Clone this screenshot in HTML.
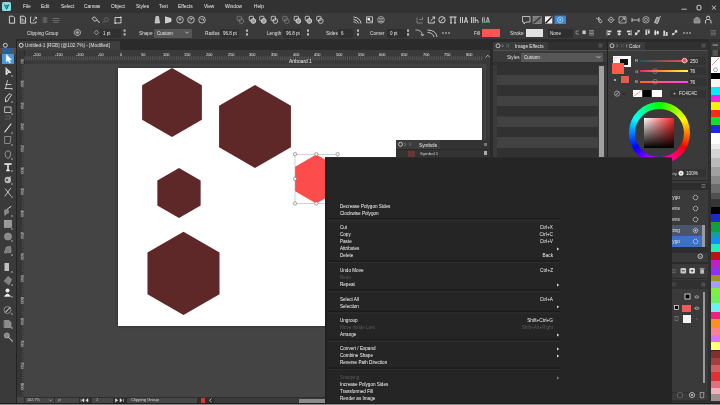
<!DOCTYPE html>
<html><head><meta charset="utf-8">
<style>
*{margin:0;padding:0;box-sizing:border-box}
html,body{width:720px;height:405px;overflow:hidden;background:#474747;font-family:"Liberation Sans",sans-serif;color:#ddd}
.a{position:absolute}
.t{position:absolute;line-height:6px;height:6px;white-space:nowrap;color:#e6e6e6;will-change:transform}
svg{position:absolute;left:0;top:0}
</style></head><body>
<div class="a" style="left:0px;top:0px;width:720px;height:12.5px;background:#323232;"></div>
<div class="a" style="left:0px;top:12.5px;width:720px;height:0.8px;background:#1c1c1c;"></div>
<div class="a" style="left:2.2px;top:2px;width:9px;height:9px;background:#86dde2;border-radius:1.5px"></div>
<svg width="720" height="405"><path d="M4.3 4.3 L6.6 9.2 L9 4.3 M5.6 5.6 L8.4 5.6 M6.1 7 L8 7" stroke="#1a6a70" stroke-width="1" fill="none"/></svg>
<div class="t" style="left:22.8px;top:4.4px;font-size:4.8px;color:#ececec;">File</div>
<div class="t" style="left:41.3px;top:4.4px;font-size:4.8px;color:#ececec;">Edit</div>
<div class="t" style="left:60.8px;top:4.4px;font-size:4.8px;color:#ececec;">Select</div>
<div class="t" style="left:83.8px;top:4.4px;font-size:4.8px;color:#ececec;">Canvas</div>
<div class="t" style="left:110.8px;top:4.4px;font-size:4.8px;color:#ececec;">Object</div>
<div class="t" style="left:135.8px;top:4.4px;font-size:4.8px;color:#ececec;">Styles</div>
<div class="t" style="left:158.8px;top:4.4px;font-size:4.8px;color:#ececec;">Text</div>
<div class="t" style="left:178.3px;top:4.4px;font-size:4.8px;color:#ececec;">Effects</div>
<div class="t" style="left:203.8px;top:4.4px;font-size:4.8px;color:#ececec;">View</div>
<div class="t" style="left:224.8px;top:4.4px;font-size:4.8px;color:#ececec;">Window</div>
<div class="t" style="left:253.8px;top:4.4px;font-size:4.8px;color:#ececec;">Help</div>
<svg width="720" height="405"><path d="M681.5 9.2 H686.7" stroke="#e0e0e0" stroke-width="0.8"/><rect x="697" y="5.4" width="3.9" height="4.5" rx="1.2" fill="none" stroke="#e0e0e0" stroke-width="1"/><path d="M711.9 5.6 L716 9.7 M716 5.6 L711.9 9.7" stroke="#e8e8e8" stroke-width="0.8"/></svg>
<div class="a" style="left:0px;top:13.3px;width:720px;height:12.7px;background:#3b3b3b;"></div>
<div class="a" style="left:0px;top:26px;width:720px;height:13px;background:#3a3a3a;"></div>
<div class="a" style="left:0px;top:39px;width:720px;height:3px;background:#2b2b2b;"></div>
<div class="a" style="left:16px;top:39px;width:477px;height:11px;background:#2b2b2b;"></div>
<div class="a" style="left:17px;top:41px;width:103px;height:9px;background:#3f3f3f;"></div>
<svg width="720" height="405"><circle cx="21.2" cy="45.3" r="2" fill="none" stroke="#d8d8d8" stroke-width="1"/></svg>
<div class="t" style="left:25px;top:42.6px;font-size:4.75px;color:#e0e0e0;">Untitled-1 [RGB] (@102.7%) - [Modified]</div>
<div class="a" style="left:0px;top:39px;width:16px;height:366px;background:#3a3a3a;"></div>
<div class="a" style="left:16px;top:39px;width:1px;height:366px;background:#232323;"></div>
<svg width="720" height="405"><circle cx="5.3" cy="45.3" r="2" fill="none" stroke="#d0d0d0" stroke-width="1"/></svg>
<div class="a" style="left:0px;top:48px;width:2.2px;height:5.5px;background:#6b4525;"></div>
<div class="a" style="left:13.7px;top:48px;width:2.3px;height:5.5px;background:#6b4525;"></div>
<div class="a" style="left:2.2px;top:48px;width:11.5px;height:5.5px;background:#2f5f90;"></div>
<div class="a" style="left:2.2px;top:53.5px;width:11.5px;height:10.5px;background:#4896dc;"></div>
<div class="a" style="left:17px;top:50px;width:476px;height:14px;background:#3a3a3a;"></div>
<div class="a" style="left:17px;top:50px;width:7px;height:347px;background:#363636;"></div>
<div class="a" style="left:24px;top:63.5px;width:466px;height:0.8px;background:#2a2a2a;"></div>
<div class="a" style="left:23.5px;top:50px;width:0.8px;height:347px;background:#2a2a2a;"></div>
<div class="a" style="left:24.3px;top:64.3px;width:466px;height:333px;background:#444444;"></div>
<div class="a" style="left:118px;top:68px;width:364px;height:258px;background:#ffffff;box-shadow:0 0 3px rgba(0,0,0,0.45)"></div>
<svg width="720" height="405"><path d="M24.90 56.3 V60.3" stroke="#747474" stroke-width="0.5"/><path d="M27.07 56.3 V60.3" stroke="#747474" stroke-width="0.5"/><path d="M29.23 56.3 V60.3" stroke="#747474" stroke-width="0.5"/><path d="M31.40 56.3 V60.3" stroke="#747474" stroke-width="0.5"/><path d="M33.57 56.3 V60.3" stroke="#747474" stroke-width="0.5"/><path d="M35.73 56.3 V60.3" stroke="#747474" stroke-width="0.5"/><path d="M37.90 56.3 V60.3" stroke="#747474" stroke-width="0.5"/><path d="M40.06 56.3 V60.3" stroke="#747474" stroke-width="0.5"/><path d="M42.23 56.3 V60.3" stroke="#747474" stroke-width="0.5"/><path d="M44.39 56.3 V60.3" stroke="#747474" stroke-width="0.5"/><path d="M46.56 56.3 V60.3" stroke="#747474" stroke-width="0.5"/><path d="M48.72 56.3 V60.3" stroke="#747474" stroke-width="0.5"/><path d="M50.89 56.3 V60.3" stroke="#747474" stroke-width="0.5"/><path d="M53.05 56.3 V60.3" stroke="#747474" stroke-width="0.5"/><path d="M55.22 56.3 V60.3" stroke="#747474" stroke-width="0.5"/><path d="M57.38 56.3 V60.3" stroke="#747474" stroke-width="0.5"/><path d="M59.55 56.3 V60.3" stroke="#747474" stroke-width="0.5"/><path d="M61.71 56.3 V60.3" stroke="#747474" stroke-width="0.5"/><path d="M63.88 56.3 V60.3" stroke="#747474" stroke-width="0.5"/><path d="M66.04 56.3 V60.3" stroke="#747474" stroke-width="0.5"/><path d="M68.21 56.3 V60.3" stroke="#747474" stroke-width="0.5"/><path d="M70.37 56.3 V60.3" stroke="#747474" stroke-width="0.5"/><path d="M72.54 56.3 V60.3" stroke="#747474" stroke-width="0.5"/><path d="M74.70 56.3 V60.3" stroke="#747474" stroke-width="0.5"/><path d="M76.87 56.3 V60.3" stroke="#747474" stroke-width="0.5"/><path d="M79.03 56.3 V60.3" stroke="#747474" stroke-width="0.5"/><path d="M81.20 56.3 V60.3" stroke="#747474" stroke-width="0.5"/><path d="M83.36 56.3 V60.3" stroke="#747474" stroke-width="0.5"/><path d="M85.53 56.3 V60.3" stroke="#747474" stroke-width="0.5"/><path d="M87.69 56.3 V60.3" stroke="#747474" stroke-width="0.5"/><path d="M89.86 56.3 V60.3" stroke="#747474" stroke-width="0.5"/><path d="M92.02 56.3 V60.3" stroke="#747474" stroke-width="0.5"/><path d="M94.19 56.3 V60.3" stroke="#747474" stroke-width="0.5"/><path d="M96.35 56.3 V60.3" stroke="#747474" stroke-width="0.5"/><path d="M98.52 56.3 V60.3" stroke="#747474" stroke-width="0.5"/><path d="M100.68 56.3 V60.3" stroke="#747474" stroke-width="0.5"/><path d="M102.84 56.3 V60.3" stroke="#747474" stroke-width="0.5"/><path d="M105.01 56.3 V60.3" stroke="#747474" stroke-width="0.5"/><path d="M107.17 56.3 V60.3" stroke="#747474" stroke-width="0.5"/><path d="M109.34 56.3 V60.3" stroke="#747474" stroke-width="0.5"/><path d="M111.50 56.3 V60.3" stroke="#747474" stroke-width="0.5"/><path d="M113.67 56.3 V60.3" stroke="#747474" stroke-width="0.5"/><path d="M115.83 56.3 V60.3" stroke="#747474" stroke-width="0.5"/><path d="M118.00 56.3 V60.3" stroke="#747474" stroke-width="0.5"/><path d="M120.17 56.3 V60.3" stroke="#747474" stroke-width="0.5"/><path d="M122.33 56.3 V60.3" stroke="#747474" stroke-width="0.5"/><path d="M124.50 56.3 V60.3" stroke="#747474" stroke-width="0.5"/><path d="M126.66 56.3 V60.3" stroke="#747474" stroke-width="0.5"/><path d="M128.82 56.3 V60.3" stroke="#747474" stroke-width="0.5"/><path d="M130.99 56.3 V60.3" stroke="#747474" stroke-width="0.5"/><path d="M133.16 56.3 V60.3" stroke="#747474" stroke-width="0.5"/><path d="M135.32 56.3 V60.3" stroke="#747474" stroke-width="0.5"/><path d="M137.49 56.3 V60.3" stroke="#747474" stroke-width="0.5"/><path d="M139.65 56.3 V60.3" stroke="#747474" stroke-width="0.5"/><path d="M141.81 56.3 V60.3" stroke="#747474" stroke-width="0.5"/><path d="M143.98 56.3 V60.3" stroke="#747474" stroke-width="0.5"/><path d="M146.15 56.3 V60.3" stroke="#747474" stroke-width="0.5"/><path d="M148.31 56.3 V60.3" stroke="#747474" stroke-width="0.5"/><path d="M150.47 56.3 V60.3" stroke="#747474" stroke-width="0.5"/><path d="M152.64 56.3 V60.3" stroke="#747474" stroke-width="0.5"/><path d="M154.81 56.3 V60.3" stroke="#747474" stroke-width="0.5"/><path d="M156.97 56.3 V60.3" stroke="#747474" stroke-width="0.5"/><path d="M159.13 56.3 V60.3" stroke="#747474" stroke-width="0.5"/><path d="M161.30 56.3 V60.3" stroke="#747474" stroke-width="0.5"/><path d="M163.47 56.3 V60.3" stroke="#747474" stroke-width="0.5"/><path d="M165.63 56.3 V60.3" stroke="#747474" stroke-width="0.5"/><path d="M167.80 56.3 V60.3" stroke="#747474" stroke-width="0.5"/><path d="M169.96 56.3 V60.3" stroke="#747474" stroke-width="0.5"/><path d="M172.12 56.3 V60.3" stroke="#747474" stroke-width="0.5"/><path d="M174.29 56.3 V60.3" stroke="#747474" stroke-width="0.5"/><path d="M176.46 56.3 V60.3" stroke="#747474" stroke-width="0.5"/><path d="M178.62 56.3 V60.3" stroke="#747474" stroke-width="0.5"/><path d="M180.79 56.3 V60.3" stroke="#747474" stroke-width="0.5"/><path d="M182.95 56.3 V60.3" stroke="#747474" stroke-width="0.5"/><path d="M185.11 56.3 V60.3" stroke="#747474" stroke-width="0.5"/><path d="M187.28 56.3 V60.3" stroke="#747474" stroke-width="0.5"/><path d="M189.44 56.3 V60.3" stroke="#747474" stroke-width="0.5"/><path d="M191.61 56.3 V60.3" stroke="#747474" stroke-width="0.5"/><path d="M193.77 56.3 V60.3" stroke="#747474" stroke-width="0.5"/><path d="M195.94 56.3 V60.3" stroke="#747474" stroke-width="0.5"/><path d="M198.10 56.3 V60.3" stroke="#747474" stroke-width="0.5"/><path d="M200.27 56.3 V60.3" stroke="#747474" stroke-width="0.5"/><path d="M202.44 56.3 V60.3" stroke="#747474" stroke-width="0.5"/><path d="M204.60 56.3 V60.3" stroke="#747474" stroke-width="0.5"/><path d="M206.76 56.3 V60.3" stroke="#747474" stroke-width="0.5"/><path d="M208.93 56.3 V60.3" stroke="#747474" stroke-width="0.5"/><path d="M211.09 56.3 V60.3" stroke="#747474" stroke-width="0.5"/><path d="M213.26 56.3 V60.3" stroke="#747474" stroke-width="0.5"/><path d="M215.42 56.3 V60.3" stroke="#747474" stroke-width="0.5"/><path d="M217.59 56.3 V60.3" stroke="#747474" stroke-width="0.5"/><path d="M219.75 56.3 V60.3" stroke="#747474" stroke-width="0.5"/><path d="M221.92 56.3 V60.3" stroke="#747474" stroke-width="0.5"/><path d="M224.08 56.3 V60.3" stroke="#747474" stroke-width="0.5"/><path d="M226.25 56.3 V60.3" stroke="#747474" stroke-width="0.5"/><path d="M228.41 56.3 V60.3" stroke="#747474" stroke-width="0.5"/><path d="M230.58 56.3 V60.3" stroke="#747474" stroke-width="0.5"/><path d="M232.75 56.3 V60.3" stroke="#747474" stroke-width="0.5"/><path d="M234.91 56.3 V60.3" stroke="#747474" stroke-width="0.5"/><path d="M237.07 56.3 V60.3" stroke="#747474" stroke-width="0.5"/><path d="M239.24 56.3 V60.3" stroke="#747474" stroke-width="0.5"/><path d="M241.41 56.3 V60.3" stroke="#747474" stroke-width="0.5"/><path d="M243.57 56.3 V60.3" stroke="#747474" stroke-width="0.5"/><path d="M245.74 56.3 V60.3" stroke="#747474" stroke-width="0.5"/><path d="M247.90 56.3 V60.3" stroke="#747474" stroke-width="0.5"/><path d="M250.06 56.3 V60.3" stroke="#747474" stroke-width="0.5"/><path d="M252.23 56.3 V60.3" stroke="#747474" stroke-width="0.5"/><path d="M254.39 56.3 V60.3" stroke="#747474" stroke-width="0.5"/><path d="M256.56 56.3 V60.3" stroke="#747474" stroke-width="0.5"/><path d="M258.72 56.3 V60.3" stroke="#747474" stroke-width="0.5"/><path d="M260.89 56.3 V60.3" stroke="#747474" stroke-width="0.5"/><path d="M263.05 56.3 V60.3" stroke="#747474" stroke-width="0.5"/><path d="M265.22 56.3 V60.3" stroke="#747474" stroke-width="0.5"/><path d="M267.38 56.3 V60.3" stroke="#747474" stroke-width="0.5"/><path d="M269.55 56.3 V60.3" stroke="#747474" stroke-width="0.5"/><path d="M271.71 56.3 V60.3" stroke="#747474" stroke-width="0.5"/><path d="M273.88 56.3 V60.3" stroke="#747474" stroke-width="0.5"/><path d="M276.04 56.3 V60.3" stroke="#747474" stroke-width="0.5"/><path d="M278.21 56.3 V60.3" stroke="#747474" stroke-width="0.5"/><path d="M280.37 56.3 V60.3" stroke="#747474" stroke-width="0.5"/><path d="M282.54 56.3 V60.3" stroke="#747474" stroke-width="0.5"/><path d="M284.70 56.3 V60.3" stroke="#747474" stroke-width="0.5"/><path d="M286.87 56.3 V60.3" stroke="#747474" stroke-width="0.5"/><path d="M289.03 56.3 V60.3" stroke="#747474" stroke-width="0.5"/><path d="M291.20 56.3 V60.3" stroke="#747474" stroke-width="0.5"/><path d="M293.37 56.3 V60.3" stroke="#747474" stroke-width="0.5"/><path d="M295.53 56.3 V60.3" stroke="#747474" stroke-width="0.5"/><path d="M297.69 56.3 V60.3" stroke="#747474" stroke-width="0.5"/><path d="M299.86 56.3 V60.3" stroke="#747474" stroke-width="0.5"/><path d="M302.02 56.3 V60.3" stroke="#747474" stroke-width="0.5"/><path d="M304.19 56.3 V60.3" stroke="#747474" stroke-width="0.5"/><path d="M306.35 56.3 V60.3" stroke="#747474" stroke-width="0.5"/><path d="M308.52 56.3 V60.3" stroke="#747474" stroke-width="0.5"/><path d="M310.69 56.3 V60.3" stroke="#747474" stroke-width="0.5"/><path d="M312.85 56.3 V60.3" stroke="#747474" stroke-width="0.5"/><path d="M315.02 56.3 V60.3" stroke="#747474" stroke-width="0.5"/><path d="M317.18 56.3 V60.3" stroke="#747474" stroke-width="0.5"/><path d="M319.35 56.3 V60.3" stroke="#747474" stroke-width="0.5"/><path d="M321.51 56.3 V60.3" stroke="#747474" stroke-width="0.5"/><path d="M323.68 56.3 V60.3" stroke="#747474" stroke-width="0.5"/><path d="M325.84 56.3 V60.3" stroke="#747474" stroke-width="0.5"/><path d="M328.00 56.3 V60.3" stroke="#747474" stroke-width="0.5"/><path d="M330.17 56.3 V60.3" stroke="#747474" stroke-width="0.5"/><path d="M332.34 56.3 V60.3" stroke="#747474" stroke-width="0.5"/><path d="M334.50 56.3 V60.3" stroke="#747474" stroke-width="0.5"/><path d="M336.67 56.3 V60.3" stroke="#747474" stroke-width="0.5"/><path d="M338.83 56.3 V60.3" stroke="#747474" stroke-width="0.5"/><path d="M341.00 56.3 V60.3" stroke="#747474" stroke-width="0.5"/><path d="M343.16 56.3 V60.3" stroke="#747474" stroke-width="0.5"/><path d="M345.32 56.3 V60.3" stroke="#747474" stroke-width="0.5"/><path d="M347.49 56.3 V60.3" stroke="#747474" stroke-width="0.5"/><path d="M349.65 56.3 V60.3" stroke="#747474" stroke-width="0.5"/><path d="M351.82 56.3 V60.3" stroke="#747474" stroke-width="0.5"/><path d="M353.99 56.3 V60.3" stroke="#747474" stroke-width="0.5"/><path d="M356.15 56.3 V60.3" stroke="#747474" stroke-width="0.5"/><path d="M358.31 56.3 V60.3" stroke="#747474" stroke-width="0.5"/><path d="M360.48 56.3 V60.3" stroke="#747474" stroke-width="0.5"/><path d="M362.64 56.3 V60.3" stroke="#747474" stroke-width="0.5"/><path d="M364.81 56.3 V60.3" stroke="#747474" stroke-width="0.5"/><path d="M366.97 56.3 V60.3" stroke="#747474" stroke-width="0.5"/><path d="M369.14 56.3 V60.3" stroke="#747474" stroke-width="0.5"/><path d="M371.30 56.3 V60.3" stroke="#747474" stroke-width="0.5"/><path d="M373.47 56.3 V60.3" stroke="#747474" stroke-width="0.5"/><path d="M375.63 56.3 V60.3" stroke="#747474" stroke-width="0.5"/><path d="M377.80 56.3 V60.3" stroke="#747474" stroke-width="0.5"/><path d="M379.96 56.3 V60.3" stroke="#747474" stroke-width="0.5"/><path d="M382.13 56.3 V60.3" stroke="#747474" stroke-width="0.5"/><path d="M384.29 56.3 V60.3" stroke="#747474" stroke-width="0.5"/><path d="M386.46 56.3 V60.3" stroke="#747474" stroke-width="0.5"/><path d="M388.62 56.3 V60.3" stroke="#747474" stroke-width="0.5"/><path d="M390.79 56.3 V60.3" stroke="#747474" stroke-width="0.5"/><path d="M392.95 56.3 V60.3" stroke="#747474" stroke-width="0.5"/><path d="M395.12 56.3 V60.3" stroke="#747474" stroke-width="0.5"/><path d="M397.28 56.3 V60.3" stroke="#747474" stroke-width="0.5"/><path d="M399.45 56.3 V60.3" stroke="#747474" stroke-width="0.5"/><path d="M401.62 56.3 V60.3" stroke="#747474" stroke-width="0.5"/><path d="M403.78 56.3 V60.3" stroke="#747474" stroke-width="0.5"/><path d="M405.94 56.3 V60.3" stroke="#747474" stroke-width="0.5"/><path d="M408.11 56.3 V60.3" stroke="#747474" stroke-width="0.5"/><path d="M410.27 56.3 V60.3" stroke="#747474" stroke-width="0.5"/><path d="M412.44 56.3 V60.3" stroke="#747474" stroke-width="0.5"/><path d="M414.60 56.3 V60.3" stroke="#747474" stroke-width="0.5"/><path d="M416.77 56.3 V60.3" stroke="#747474" stroke-width="0.5"/><path d="M418.94 56.3 V60.3" stroke="#747474" stroke-width="0.5"/><path d="M421.10 56.3 V60.3" stroke="#747474" stroke-width="0.5"/><path d="M423.26 56.3 V60.3" stroke="#747474" stroke-width="0.5"/><path d="M425.43 56.3 V60.3" stroke="#747474" stroke-width="0.5"/><path d="M427.59 56.3 V60.3" stroke="#747474" stroke-width="0.5"/><path d="M429.76 56.3 V60.3" stroke="#747474" stroke-width="0.5"/><path d="M431.92 56.3 V60.3" stroke="#747474" stroke-width="0.5"/><path d="M434.09 56.3 V60.3" stroke="#747474" stroke-width="0.5"/><path d="M436.25 56.3 V60.3" stroke="#747474" stroke-width="0.5"/><path d="M438.42 56.3 V60.3" stroke="#747474" stroke-width="0.5"/><path d="M440.58 56.3 V60.3" stroke="#747474" stroke-width="0.5"/><path d="M442.75 56.3 V60.3" stroke="#747474" stroke-width="0.5"/><path d="M444.92 56.3 V60.3" stroke="#747474" stroke-width="0.5"/><path d="M447.08 56.3 V60.3" stroke="#747474" stroke-width="0.5"/><path d="M449.25 56.3 V60.3" stroke="#747474" stroke-width="0.5"/><path d="M451.41 56.3 V60.3" stroke="#747474" stroke-width="0.5"/><path d="M453.57 56.3 V60.3" stroke="#747474" stroke-width="0.5"/><path d="M455.74 56.3 V60.3" stroke="#747474" stroke-width="0.5"/><path d="M457.90 56.3 V60.3" stroke="#747474" stroke-width="0.5"/><path d="M460.07 56.3 V60.3" stroke="#747474" stroke-width="0.5"/><path d="M462.24 56.3 V60.3" stroke="#747474" stroke-width="0.5"/><path d="M464.40 56.3 V60.3" stroke="#747474" stroke-width="0.5"/><path d="M466.56 56.3 V60.3" stroke="#747474" stroke-width="0.5"/><path d="M468.73 56.3 V60.3" stroke="#747474" stroke-width="0.5"/><path d="M470.89 56.3 V60.3" stroke="#747474" stroke-width="0.5"/><path d="M473.06 56.3 V60.3" stroke="#747474" stroke-width="0.5"/><path d="M475.22 56.3 V60.3" stroke="#747474" stroke-width="0.5"/><path d="M477.39 56.3 V60.3" stroke="#747474" stroke-width="0.5"/><path d="M479.55 56.3 V60.3" stroke="#747474" stroke-width="0.5"/><path d="M481.72 56.3 V60.3" stroke="#747474" stroke-width="0.5"/></svg>
<div class="t" style="left:32.900000000000006px;top:51.9px;font-size:3.9px;color:#ececec;">-200</div>
<div class="t" style="left:54.55000000000001px;top:51.9px;font-size:3.9px;color:#ececec;">-150</div>
<div class="t" style="left:76.2px;top:51.9px;font-size:3.9px;color:#ececec;">-100</div>
<div class="t" style="left:97.85px;top:51.9px;font-size:3.9px;color:#ececec;">-50</div>
<div class="t" style="left:119.5px;top:51.9px;font-size:3.9px;color:#ececec;">0</div>
<div class="t" style="left:141.15px;top:51.9px;font-size:3.9px;color:#ececec;">50</div>
<div class="t" style="left:162.8px;top:51.9px;font-size:3.9px;color:#ececec;">100</div>
<div class="t" style="left:184.45px;top:51.9px;font-size:3.9px;color:#ececec;">150</div>
<div class="t" style="left:206.1px;top:51.9px;font-size:3.9px;color:#ececec;">200</div>
<div class="t" style="left:227.75px;top:51.9px;font-size:3.9px;color:#ececec;">250</div>
<div class="t" style="left:249.39999999999998px;top:51.9px;font-size:3.9px;color:#ececec;">300</div>
<div class="t" style="left:271.04999999999995px;top:51.9px;font-size:3.9px;color:#ececec;">350</div>
<div class="t" style="left:292.7px;top:51.9px;font-size:3.9px;color:#ececec;">400</div>
<div class="t" style="left:314.35px;top:51.9px;font-size:3.9px;color:#ececec;">450</div>
<div class="t" style="left:336.0px;top:51.9px;font-size:3.9px;color:#ececec;">500</div>
<div class="t" style="left:357.65px;top:51.9px;font-size:3.9px;color:#ececec;">550</div>
<div class="t" style="left:379.29999999999995px;top:51.9px;font-size:3.9px;color:#ececec;">600</div>
<div class="t" style="left:400.95px;top:51.9px;font-size:3.9px;color:#ececec;">650</div>
<div class="t" style="left:422.59999999999997px;top:51.9px;font-size:3.9px;color:#ececec;">700</div>
<div class="t" style="left:444.25px;top:51.9px;font-size:3.9px;color:#ececec;">750</div>
<div class="t" style="left:465.9px;top:51.9px;font-size:3.9px;color:#ececec;">800</div>
<svg width="720" height="405"><path d="M22 65.84 H24" stroke="#6a6a6a" stroke-width="0.45"/><path d="M22 68.00 H24" stroke="#6a6a6a" stroke-width="0.45"/><path d="M22 70.17 H24" stroke="#6a6a6a" stroke-width="0.45"/><path d="M22 72.33 H24" stroke="#6a6a6a" stroke-width="0.45"/><path d="M22 74.50 H24" stroke="#6a6a6a" stroke-width="0.45"/><path d="M22 76.66 H24" stroke="#6a6a6a" stroke-width="0.45"/><path d="M22 78.83 H24" stroke="#6a6a6a" stroke-width="0.45"/><path d="M22 80.99 H24" stroke="#6a6a6a" stroke-width="0.45"/><path d="M22 83.16 H24" stroke="#6a6a6a" stroke-width="0.45"/><path d="M22 85.32 H24" stroke="#6a6a6a" stroke-width="0.45"/><path d="M22 87.48 H24" stroke="#6a6a6a" stroke-width="0.45"/><path d="M22 89.65 H24" stroke="#6a6a6a" stroke-width="0.45"/><path d="M22 91.82 H24" stroke="#6a6a6a" stroke-width="0.45"/><path d="M22 93.98 H24" stroke="#6a6a6a" stroke-width="0.45"/><path d="M22 96.15 H24" stroke="#6a6a6a" stroke-width="0.45"/><path d="M22 98.31 H24" stroke="#6a6a6a" stroke-width="0.45"/><path d="M22 100.48 H24" stroke="#6a6a6a" stroke-width="0.45"/><path d="M22 102.64 H24" stroke="#6a6a6a" stroke-width="0.45"/><path d="M22 104.81 H24" stroke="#6a6a6a" stroke-width="0.45"/><path d="M22 106.97 H24" stroke="#6a6a6a" stroke-width="0.45"/><path d="M22 109.14 H24" stroke="#6a6a6a" stroke-width="0.45"/><path d="M22 111.30 H24" stroke="#6a6a6a" stroke-width="0.45"/><path d="M22 113.47 H24" stroke="#6a6a6a" stroke-width="0.45"/><path d="M22 115.63 H24" stroke="#6a6a6a" stroke-width="0.45"/><path d="M22 117.80 H24" stroke="#6a6a6a" stroke-width="0.45"/><path d="M22 119.96 H24" stroke="#6a6a6a" stroke-width="0.45"/><path d="M22 122.12 H24" stroke="#6a6a6a" stroke-width="0.45"/><path d="M22 124.29 H24" stroke="#6a6a6a" stroke-width="0.45"/><path d="M22 126.45 H24" stroke="#6a6a6a" stroke-width="0.45"/><path d="M22 128.62 H24" stroke="#6a6a6a" stroke-width="0.45"/><path d="M22 130.78 H24" stroke="#6a6a6a" stroke-width="0.45"/><path d="M22 132.95 H24" stroke="#6a6a6a" stroke-width="0.45"/><path d="M22 135.11 H24" stroke="#6a6a6a" stroke-width="0.45"/><path d="M22 137.28 H24" stroke="#6a6a6a" stroke-width="0.45"/><path d="M22 139.44 H24" stroke="#6a6a6a" stroke-width="0.45"/><path d="M22 141.61 H24" stroke="#6a6a6a" stroke-width="0.45"/><path d="M22 143.77 H24" stroke="#6a6a6a" stroke-width="0.45"/><path d="M22 145.94 H24" stroke="#6a6a6a" stroke-width="0.45"/><path d="M22 148.10 H24" stroke="#6a6a6a" stroke-width="0.45"/><path d="M22 150.27 H24" stroke="#6a6a6a" stroke-width="0.45"/><path d="M22 152.44 H24" stroke="#6a6a6a" stroke-width="0.45"/><path d="M22 154.60 H24" stroke="#6a6a6a" stroke-width="0.45"/><path d="M22 156.76 H24" stroke="#6a6a6a" stroke-width="0.45"/><path d="M22 158.93 H24" stroke="#6a6a6a" stroke-width="0.45"/><path d="M22 161.09 H24" stroke="#6a6a6a" stroke-width="0.45"/><path d="M22 163.26 H24" stroke="#6a6a6a" stroke-width="0.45"/><path d="M22 165.42 H24" stroke="#6a6a6a" stroke-width="0.45"/><path d="M22 167.59 H24" stroke="#6a6a6a" stroke-width="0.45"/><path d="M22 169.75 H24" stroke="#6a6a6a" stroke-width="0.45"/><path d="M22 171.92 H24" stroke="#6a6a6a" stroke-width="0.45"/><path d="M22 174.08 H24" stroke="#6a6a6a" stroke-width="0.45"/><path d="M22 176.25 H24" stroke="#6a6a6a" stroke-width="0.45"/><path d="M22 178.41 H24" stroke="#6a6a6a" stroke-width="0.45"/><path d="M22 180.58 H24" stroke="#6a6a6a" stroke-width="0.45"/><path d="M22 182.75 H24" stroke="#6a6a6a" stroke-width="0.45"/><path d="M22 184.91 H24" stroke="#6a6a6a" stroke-width="0.45"/><path d="M22 187.07 H24" stroke="#6a6a6a" stroke-width="0.45"/><path d="M22 189.24 H24" stroke="#6a6a6a" stroke-width="0.45"/><path d="M22 191.41 H24" stroke="#6a6a6a" stroke-width="0.45"/><path d="M22 193.57 H24" stroke="#6a6a6a" stroke-width="0.45"/><path d="M22 195.74 H24" stroke="#6a6a6a" stroke-width="0.45"/><path d="M22 197.90 H24" stroke="#6a6a6a" stroke-width="0.45"/><path d="M22 200.06 H24" stroke="#6a6a6a" stroke-width="0.45"/><path d="M22 202.23 H24" stroke="#6a6a6a" stroke-width="0.45"/><path d="M22 204.39 H24" stroke="#6a6a6a" stroke-width="0.45"/><path d="M22 206.56 H24" stroke="#6a6a6a" stroke-width="0.45"/><path d="M22 208.72 H24" stroke="#6a6a6a" stroke-width="0.45"/><path d="M22 210.89 H24" stroke="#6a6a6a" stroke-width="0.45"/><path d="M22 213.05 H24" stroke="#6a6a6a" stroke-width="0.45"/><path d="M22 215.22 H24" stroke="#6a6a6a" stroke-width="0.45"/><path d="M22 217.38 H24" stroke="#6a6a6a" stroke-width="0.45"/><path d="M22 219.55 H24" stroke="#6a6a6a" stroke-width="0.45"/><path d="M22 221.71 H24" stroke="#6a6a6a" stroke-width="0.45"/><path d="M22 223.88 H24" stroke="#6a6a6a" stroke-width="0.45"/><path d="M22 226.04 H24" stroke="#6a6a6a" stroke-width="0.45"/><path d="M22 228.21 H24" stroke="#6a6a6a" stroke-width="0.45"/><path d="M22 230.37 H24" stroke="#6a6a6a" stroke-width="0.45"/><path d="M22 232.54 H24" stroke="#6a6a6a" stroke-width="0.45"/><path d="M22 234.70 H24" stroke="#6a6a6a" stroke-width="0.45"/><path d="M22 236.87 H24" stroke="#6a6a6a" stroke-width="0.45"/><path d="M22 239.03 H24" stroke="#6a6a6a" stroke-width="0.45"/><path d="M22 241.20 H24" stroke="#6a6a6a" stroke-width="0.45"/><path d="M22 243.36 H24" stroke="#6a6a6a" stroke-width="0.45"/><path d="M22 245.53 H24" stroke="#6a6a6a" stroke-width="0.45"/><path d="M22 247.69 H24" stroke="#6a6a6a" stroke-width="0.45"/><path d="M22 249.86 H24" stroke="#6a6a6a" stroke-width="0.45"/><path d="M22 252.02 H24" stroke="#6a6a6a" stroke-width="0.45"/><path d="M22 254.19 H24" stroke="#6a6a6a" stroke-width="0.45"/><path d="M22 256.35 H24" stroke="#6a6a6a" stroke-width="0.45"/><path d="M22 258.52 H24" stroke="#6a6a6a" stroke-width="0.45"/><path d="M22 260.69 H24" stroke="#6a6a6a" stroke-width="0.45"/><path d="M22 262.85 H24" stroke="#6a6a6a" stroke-width="0.45"/><path d="M22 265.02 H24" stroke="#6a6a6a" stroke-width="0.45"/><path d="M22 267.18 H24" stroke="#6a6a6a" stroke-width="0.45"/><path d="M22 269.35 H24" stroke="#6a6a6a" stroke-width="0.45"/><path d="M22 271.51 H24" stroke="#6a6a6a" stroke-width="0.45"/><path d="M22 273.68 H24" stroke="#6a6a6a" stroke-width="0.45"/><path d="M22 275.84 H24" stroke="#6a6a6a" stroke-width="0.45"/><path d="M22 278.00 H24" stroke="#6a6a6a" stroke-width="0.45"/><path d="M22 280.17 H24" stroke="#6a6a6a" stroke-width="0.45"/><path d="M22 282.34 H24" stroke="#6a6a6a" stroke-width="0.45"/><path d="M22 284.50 H24" stroke="#6a6a6a" stroke-width="0.45"/><path d="M22 286.67 H24" stroke="#6a6a6a" stroke-width="0.45"/><path d="M22 288.83 H24" stroke="#6a6a6a" stroke-width="0.45"/><path d="M22 291.00 H24" stroke="#6a6a6a" stroke-width="0.45"/><path d="M22 293.16 H24" stroke="#6a6a6a" stroke-width="0.45"/><path d="M22 295.32 H24" stroke="#6a6a6a" stroke-width="0.45"/><path d="M22 297.49 H24" stroke="#6a6a6a" stroke-width="0.45"/><path d="M22 299.65 H24" stroke="#6a6a6a" stroke-width="0.45"/><path d="M22 301.82 H24" stroke="#6a6a6a" stroke-width="0.45"/><path d="M22 303.99 H24" stroke="#6a6a6a" stroke-width="0.45"/><path d="M22 306.15 H24" stroke="#6a6a6a" stroke-width="0.45"/><path d="M22 308.31 H24" stroke="#6a6a6a" stroke-width="0.45"/><path d="M22 310.48 H24" stroke="#6a6a6a" stroke-width="0.45"/><path d="M22 312.64 H24" stroke="#6a6a6a" stroke-width="0.45"/><path d="M22 314.81 H24" stroke="#6a6a6a" stroke-width="0.45"/><path d="M22 316.97 H24" stroke="#6a6a6a" stroke-width="0.45"/><path d="M22 319.14 H24" stroke="#6a6a6a" stroke-width="0.45"/><path d="M22 321.30 H24" stroke="#6a6a6a" stroke-width="0.45"/><path d="M22 323.47 H24" stroke="#6a6a6a" stroke-width="0.45"/><path d="M22 325.63 H24" stroke="#6a6a6a" stroke-width="0.45"/><path d="M22 327.80 H24" stroke="#6a6a6a" stroke-width="0.45"/><path d="M22 329.96 H24" stroke="#6a6a6a" stroke-width="0.45"/><path d="M22 332.13 H24" stroke="#6a6a6a" stroke-width="0.45"/><path d="M22 334.29 H24" stroke="#6a6a6a" stroke-width="0.45"/><path d="M22 336.46 H24" stroke="#6a6a6a" stroke-width="0.45"/><path d="M22 338.62 H24" stroke="#6a6a6a" stroke-width="0.45"/><path d="M22 340.79 H24" stroke="#6a6a6a" stroke-width="0.45"/><path d="M22 342.95 H24" stroke="#6a6a6a" stroke-width="0.45"/><path d="M22 345.12 H24" stroke="#6a6a6a" stroke-width="0.45"/><path d="M22 347.28 H24" stroke="#6a6a6a" stroke-width="0.45"/><path d="M22 349.45 H24" stroke="#6a6a6a" stroke-width="0.45"/><path d="M22 351.62 H24" stroke="#6a6a6a" stroke-width="0.45"/><path d="M22 353.78 H24" stroke="#6a6a6a" stroke-width="0.45"/><path d="M22 355.94 H24" stroke="#6a6a6a" stroke-width="0.45"/><path d="M22 358.11 H24" stroke="#6a6a6a" stroke-width="0.45"/><path d="M22 360.27 H24" stroke="#6a6a6a" stroke-width="0.45"/><path d="M22 362.44 H24" stroke="#6a6a6a" stroke-width="0.45"/><path d="M22 364.60 H24" stroke="#6a6a6a" stroke-width="0.45"/><path d="M22 366.77 H24" stroke="#6a6a6a" stroke-width="0.45"/><path d="M22 368.94 H24" stroke="#6a6a6a" stroke-width="0.45"/><path d="M22 371.10 H24" stroke="#6a6a6a" stroke-width="0.45"/><path d="M22 373.26 H24" stroke="#6a6a6a" stroke-width="0.45"/><path d="M22 375.43 H24" stroke="#6a6a6a" stroke-width="0.45"/><path d="M22 377.59 H24" stroke="#6a6a6a" stroke-width="0.45"/><path d="M22 379.76 H24" stroke="#6a6a6a" stroke-width="0.45"/><path d="M22 381.92 H24" stroke="#6a6a6a" stroke-width="0.45"/><path d="M22 384.09 H24" stroke="#6a6a6a" stroke-width="0.45"/><path d="M22 386.25 H24" stroke="#6a6a6a" stroke-width="0.45"/><path d="M22 388.42 H24" stroke="#6a6a6a" stroke-width="0.45"/><path d="M22 390.58 H24" stroke="#6a6a6a" stroke-width="0.45"/><path d="M22 392.75 H24" stroke="#6a6a6a" stroke-width="0.45"/><path d="M22 394.92 H24" stroke="#6a6a6a" stroke-width="0.45"/></svg>
<div class="t" style="left:17.6px;top:58.5px;font-size:4.1px;color:#e0e0e0;transform-origin:0 0;transform:rotate(90deg) translate(0,-6.8px)">50</div>
<div class="t" style="left:17.6px;top:80.15px;font-size:4.1px;color:#e0e0e0;transform-origin:0 0;transform:rotate(90deg) translate(0,-6.8px)">100</div>
<div class="t" style="left:17.6px;top:101.8px;font-size:4.1px;color:#e0e0e0;transform-origin:0 0;transform:rotate(90deg) translate(0,-6.8px)">150</div>
<div class="t" style="left:17.6px;top:123.44999999999999px;font-size:4.1px;color:#e0e0e0;transform-origin:0 0;transform:rotate(90deg) translate(0,-6.8px)">200</div>
<div class="t" style="left:17.6px;top:145.1px;font-size:4.1px;color:#e0e0e0;transform-origin:0 0;transform:rotate(90deg) translate(0,-6.8px)">250</div>
<div class="t" style="left:17.6px;top:166.75px;font-size:4.1px;color:#e0e0e0;transform-origin:0 0;transform:rotate(90deg) translate(0,-6.8px)">300</div>
<div class="t" style="left:17.6px;top:188.39999999999998px;font-size:4.1px;color:#e0e0e0;transform-origin:0 0;transform:rotate(90deg) translate(0,-6.8px)">350</div>
<div class="t" style="left:17.6px;top:210.04999999999998px;font-size:4.1px;color:#e0e0e0;transform-origin:0 0;transform:rotate(90deg) translate(0,-6.8px)">400</div>
<div class="t" style="left:17.6px;top:231.7px;font-size:4.1px;color:#e0e0e0;transform-origin:0 0;transform:rotate(90deg) translate(0,-6.8px)">450</div>
<div class="t" style="left:17.6px;top:253.35000000000002px;font-size:4.1px;color:#e0e0e0;transform-origin:0 0;transform:rotate(90deg) translate(0,-6.8px)">500</div>
<div class="t" style="left:17.6px;top:275.0px;font-size:4.1px;color:#e0e0e0;transform-origin:0 0;transform:rotate(90deg) translate(0,-6.8px)">550</div>
<div class="t" style="left:17.6px;top:296.65px;font-size:4.1px;color:#e0e0e0;transform-origin:0 0;transform:rotate(90deg) translate(0,-6.8px)">600</div>
<div class="t" style="left:17.6px;top:318.29999999999995px;font-size:4.1px;color:#e0e0e0;transform-origin:0 0;transform:rotate(90deg) translate(0,-6.8px)">650</div>
<div class="t" style="left:17.6px;top:339.95px;font-size:4.1px;color:#e0e0e0;transform-origin:0 0;transform:rotate(90deg) translate(0,-6.8px)">700</div>
<div class="t" style="left:17.6px;top:361.59999999999997px;font-size:4.1px;color:#e0e0e0;transform-origin:0 0;transform:rotate(90deg) translate(0,-6.8px)">750</div>
<div class="t" style="left:17.6px;top:383.25px;font-size:4.1px;color:#e0e0e0;transform-origin:0 0;transform:rotate(90deg) translate(0,-6.8px)">800</div>
<div class="t" style="left:289px;top:58.6px;font-size:4.9px;color:#f0f0f0;">Artboard 1</div>
<svg width="720" height="405"><path d="M485.5 57.5 L487.8 55.2 L490 57.5" stroke="#ddd" stroke-width="0.7" fill="none"/></svg>
<svg width="720" height="405"><polygon fill="#5f2828" points="172.00,68.00 201.88,85.25 201.88,119.75 172.00,137.00 142.12,119.75 142.12,85.25"/><polygon fill="#5f2828" points="255.00,85.00 290.94,105.75 290.94,147.25 255.00,168.00 219.06,147.25 219.06,105.75"/><polygon fill="#5f2828" points="179.00,168.00 200.65,180.50 200.65,205.50 179.00,218.00 157.35,205.50 157.35,180.50"/><polygon fill="#5f2828" points="183.50,231.80 219.53,252.60 219.53,294.20 183.50,315.00 147.47,294.20 147.47,252.60"/><polygon fill="#fc4c4c" points="316.30,154.50 337.52,166.75 337.52,191.25 316.30,203.50 295.08,191.25 295.08,166.75"/><rect x="295" y="154.2" width="42.7" height="49.3" fill="none" stroke="#8a9ab0" stroke-width="0.45"/><circle cx="295" cy="154.2" r="1.7" fill="#f8f8f8" stroke="#6e6e6e" stroke-width="0.6"/><circle cx="316.35" cy="154.2" r="1.7" fill="#f8f8f8" stroke="#6e6e6e" stroke-width="0.6"/><circle cx="337.7" cy="154.2" r="1.7" fill="#f8f8f8" stroke="#6e6e6e" stroke-width="0.6"/><circle cx="295" cy="178.85" r="1.7" fill="#f8f8f8" stroke="#6e6e6e" stroke-width="0.6"/><circle cx="295" cy="203.5" r="1.7" fill="#f8f8f8" stroke="#6e6e6e" stroke-width="0.6"/><circle cx="316.35" cy="203.5" r="1.7" fill="#f8f8f8" stroke="#6e6e6e" stroke-width="0.6"/></svg>
<div class="a" style="left:486px;top:62px;width:4px;height:335px;background:#393939;"></div>
<div class="a" style="left:396px;top:140px;width:94px;height:17px;background:#333333;"></div>
<div class="a" style="left:396px;top:140px;width:44px;height:8.5px;background:#3c3c3c;"></div>
<div class="a" style="left:396px;top:148.5px;width:94px;height:0.6px;background:#2a2a2a;"></div>
<svg width="720" height="405"><circle cx="400.5" cy="144.3" r="2" fill="none" stroke="#d0d0d0" stroke-width="0.9"/><path d="M404.3 142.8 L405.6 144.3 L404.3 145.8" stroke="#bbb" stroke-width="0.6" fill="none"/><path d="M409.5 142.5 V146 M411 142.5 V146" stroke="#777" stroke-width="0.5"/></svg>
<div class="t" style="left:419px;top:143px;font-size:4.7px;color:#f0f0f0;">Symbols</div>
<div class="a" style="left:483.5px;top:142.5px;width:3.5px;height:3.5px;background:#777;"></div>
<div class="a" style="left:483.5px;top:151px;width:3.5px;height:4px;background:#aaa;"></div>
<div class="a" style="left:408px;top:151px;width:7px;height:6px;background:#6a3535;"></div>
<div class="t" style="left:420px;top:150.5px;font-size:4.4px;color:#cfcfcf;">Symbol 1</div>
<div class="a" style="left:24px;top:397px;width:301px;height:6.5px;background:#2e2e2e;"></div>
<div class="a" style="left:24.5px;top:397.6px;width:29px;height:5.4px;background:#474747;"></div>
<div class="t" style="left:27px;top:397.3px;font-size:3.8px;color:#d0d0d0;">102.7%</div>
<svg width="720" height="405"><path d="M49 399.5 L50.5 401 L52 399.5" stroke="#ccc" stroke-width="0.5" fill="none"/><path d="M74 399.5 L75.5 401 L77 399.5" stroke="#ccc" stroke-width="0.5" fill="none"/><path d="M107 399.5 L108.5 401 L110 399.5" stroke="#ccc" stroke-width="0.5" fill="none"/><path d="M193 399.5 L194.5 401 L196 399.5" stroke="#ccc" stroke-width="0.5" fill="none"/><path d="M81 398.6 V402 M84 398.6 L81.8 400.3 L84 402Z M88 398.6 L85.8 400.3 L88 402Z" stroke="#ddd" stroke-width="0.5" fill="#ddd"/><path d="M115.5 398.6 L117.7 400.3 L115.5 402Z M120 398.6 L122.2 400.3 L120 402Z M123.5 398.6 V402" stroke="#ddd" stroke-width="0.5" fill="#ddd"/><path d="M211.5 398.5 L209.5 400.3 L211.5 402" stroke="#eee" stroke-width="0.7" fill="none"/></svg>
<div class="a" style="left:55px;top:397.6px;width:24px;height:5.4px;background:#474747;"></div>
<div class="t" style="left:58px;top:397.3px;font-size:3.8px;color:#aaa;">pt</div>
<div class="a" style="left:92px;top:397.6px;width:21px;height:5.4px;background:#474747;"></div>
<div class="t" style="left:96px;top:397.3px;font-size:3.8px;color:#ccc;">1</div>
<div class="a" style="left:126.5px;top:397.6px;width:70px;height:5.4px;background:#474747;"></div>
<div class="t" style="left:131px;top:397.3px;font-size:4.2px;color:#d8d8d8;">Clipping Group</div>
<div class="a" style="left:200.5px;top:398px;width:4.5px;height:5px;background:#e03030;"></div>
<div class="a" style="left:214px;top:398.3px;width:111px;height:4.5px;background:#3a3a3a;"></div>
<div class="a" style="left:299px;top:398.5px;width:26px;height:4.2px;background:#8a8a8a;"></div>
<div class="a" style="left:490px;top:39px;width:230px;height:366px;background:#2a2a2a;"></div>
<div class="a" style="left:493px;top:41.5px;width:114px;height:363.5px;background:#3a3a3a;"></div>
<div class="a" style="left:493px;top:41.5px;width:114px;height:8.5px;background:#303030;"></div>
<div class="a" style="left:493px;top:41.5px;width:55px;height:8.5px;background:#3b3b3b;"></div>
<div class="a" style="left:493px;top:50px;width:114px;height:0.7px;background:#505050;"></div>
<svg width="720" height="405"><circle cx="498" cy="45.8" r="2" fill="none" stroke="#d0d0d0" stroke-width="0.9"/><path d="M502 44.3 L503.3 45.8 L502 47.3" stroke="#bbb" stroke-width="0.6" fill="none"/><path d="M507 44 V47.5 M508.5 44 V47.5" stroke="#6a8a8a" stroke-width="0.5"/></svg>
<div class="t" style="left:515px;top:43.8px;font-size:4.7px;color:#ececec;">Image Effects</div>
<svg width="720" height="405"><path d="M598.5 44 H602.5 M598.5 45.5 H602.5 M598.5 47 H602.5" stroke="#777" stroke-width="0.6"/></svg>
<div class="t" style="left:507px;top:55px;font-size:4.6px;color:#e0e0e0;">Styles</div>
<div class="a" style="left:521px;top:52.5px;width:82px;height:9px;background:#575757;"></div>
<div class="t" style="left:524px;top:55px;font-size:4.6px;color:#e8e8e8;">Custom</div>
<svg width="720" height="405"><path d="M596.5 56 L598.5 58 L600.5 56" stroke="#ddd" stroke-width="0.7" fill="none"/></svg>
<div class="a" style="left:493px;top:62px;width:114px;height:2.5px;background:#303030;"></div>
<div class="a" style="left:496.5px;top:64.5px;width:101.5px;height:10.4px;background:#313131;"></div>
<div class="a" style="left:496.5px;top:74.9px;width:101.5px;height:10.4px;background:#424242;"></div>
<div class="a" style="left:496.5px;top:85.30000000000001px;width:101.5px;height:10.4px;background:#313131;"></div>
<div class="a" style="left:496.5px;top:95.70000000000002px;width:101.5px;height:10.4px;background:#424242;"></div>
<div class="a" style="left:496.5px;top:106.10000000000002px;width:101.5px;height:10.4px;background:#313131;"></div>
<div class="a" style="left:496.5px;top:116.50000000000003px;width:101.5px;height:10.4px;background:#424242;"></div>
<div class="a" style="left:496.5px;top:126.90000000000003px;width:101.5px;height:10.4px;background:#313131;"></div>
<div class="a" style="left:496.5px;top:137.30000000000004px;width:101.5px;height:10.4px;background:#424242;"></div>
<div class="a" style="left:496.5px;top:147.70000000000005px;width:101.5px;height:10.4px;background:#313131;"></div>
<div class="a" style="left:599px;top:66px;width:4.5px;height:91px;background:#a0a0a0;"></div>
<div class="a" style="left:607px;top:41.5px;width:1.4px;height:363.5px;background:#222222;"></div>
<div class="a" style="left:608.4px;top:41.5px;width:99.6px;height:363.5px;background:#3a3a3a;"></div>
<div class="a" style="left:608.4px;top:41.5px;width:99.6px;height:8.5px;background:#303030;"></div>
<div class="a" style="left:608.4px;top:41.5px;width:36.6px;height:8.5px;background:#3b3b3b;"></div>
<div class="a" style="left:608.4px;top:50px;width:99.6px;height:0.7px;background:#505050;"></div>
<svg width="720" height="405"><circle cx="612" cy="45.8" r="2" fill="none" stroke="#d0d0d0" stroke-width="0.9"/><path d="M616.5 44.3 L617.8 45.8 L616.5 47.3" stroke="#bbb" stroke-width="0.6" fill="none"/><path d="M621.5 44 V47.5 M623 44 V47.5" stroke="#666" stroke-width="0.5"/><path d="M627 44 Q625.8 45.8 627 47.5" stroke="#ccc" stroke-width="0.5" fill="none"/><path d="M701.5 44 H705.5 M701.5 45.5 H705.5 M701.5 47 H705.5" stroke="#777" stroke-width="0.6"/></svg>
<div class="t" style="left:628.5px;top:43.8px;font-size:4.7px;color:#ececec;">Color</div>
<div class="a" style="left:613.3px;top:56.3px;width:17.3px;height:11.2px;background:#ffffff;"></div>
<div class="a" style="left:620px;top:59px;width:7.5px;height:5.5px;background:#111111;"></div>
<div class="a" style="left:612px;top:63.2px;width:12.4px;height:11.1px;background:#fc5a4c;"></div>
<div class="a" style="left:620.6px;top:76px;width:8px;height:7.3px;background:#e85a50;"></div>
<svg width="720" height="405"><path d="M614.5 61 V57.5 H618" stroke="#ccc" stroke-width="0.6" fill="none"/><circle cx="615" cy="80" r="0.9" fill="#ddd"/></svg>
<div class="t" style="left:634.5px;top:58.2px;font-size:4.4px;color:#cfcfcf;">R</div>
<div class="t" style="left:634.5px;top:68.7px;font-size:4.4px;color:#cfcfcf;">G</div>
<div class="t" style="left:634.5px;top:79.2px;font-size:4.4px;color:#cfcfcf;">B</div>
<div class="a" style="left:640px;top:59.5px;width:48px;height:2.4px;background:linear-gradient(90deg,#1f5a5a,#ff4a5a)"></div>
<div class="a" style="left:640px;top:70px;width:48px;height:2.2px;background:linear-gradient(90deg,#ff1a6a,#ff9a30 50%,#ffff40)"></div>
<div class="a" style="left:640px;top:80.5px;width:48px;height:2.2px;background:linear-gradient(90deg,#ff6a1a,#ff40ff)"></div>
<svg width="720" height="405"><circle cx="684.5" cy="60.6" r="2.3" fill="#ff4a5a" stroke="#fff" stroke-width="0.7"/><circle cx="655" cy="71.1" r="2.3" fill="none" stroke="#9a9a9a" stroke-width="0.6"/><circle cx="655" cy="81.6" r="2.3" fill="none" stroke="#9a9a9a" stroke-width="0.6"/></svg>
<div class="a" style="left:688.5px;top:56.6px;width:17px;height:8px;background:#333333;"></div>
<div class="t" style="left:690px;top:58.6px;font-size:4.7px;color:#f0f0f0;">250</div>
<div class="a" style="left:688.5px;top:67.1px;width:17px;height:8px;background:#333333;"></div>
<div class="t" style="left:690px;top:69.1px;font-size:4.7px;color:#f0f0f0;">76</div>
<div class="a" style="left:688.5px;top:77.6px;width:17px;height:8px;background:#333333;"></div>
<div class="t" style="left:690px;top:79.6px;font-size:4.7px;color:#f0f0f0;">76</div>
<svg width="720" height="405"><circle cx="617" cy="93.6" r="2.6" fill="none" stroke="#bbb" stroke-width="0.7"/><path d="M615.8 95 L618.4 92.3" stroke="#ddd" stroke-width="0.8"/><circle cx="624" cy="93.6" r="2.6" fill="#333" stroke="#444" stroke-width="0.5"/></svg>
<div class="a" style="left:632.7px;top:89.6px;width:9.3px;height:7.6px;background:#ffffff;"></div>
<svg width="720" height="405"><path d="M633.5 96.5 L641.5 90.5" stroke="#e04040" stroke-width="0.6"/></svg>
<div class="a" style="left:642.5px;top:89.6px;width:8.5px;height:7.6px;background:#000000;"></div>
<div class="a" style="left:651.5px;top:89.6px;width:10px;height:7.6px;background:#ffffff;"></div>
<div class="a" style="left:670px;top:89.6px;width:36px;height:8px;background:#333333;"></div>
<svg width="720" height="405"><circle cx="674.5" cy="93.6" r="0.9" fill="#ccc"/></svg>
<div class="t" style="left:678.5px;top:91.4px;font-size:4.7px;color:#ececec;">FC4C4C</div>
<div class="a" style="left:628.9px;top:102.4px;width:61.2px;height:61.2px;border-radius:50%;background:conic-gradient(hsl(120,100%,50%) 0deg,hsl(105,100%,50%) 15deg,hsl(90,100%,50%) 30deg,hsl(75,100%,50%) 45deg,hsl(60,100%,50%) 60deg,hsl(45,100%,50%) 75deg,hsl(30,100%,50%) 90deg,hsl(15,100%,50%) 105deg,hsl(0,100%,50%) 120deg,hsl(345,100%,50%) 135deg,hsl(330,100%,50%) 150deg,hsl(315,100%,50%) 165deg,hsl(300,100%,50%) 180deg,hsl(285,100%,50%) 195deg,hsl(270,100%,50%) 210deg,hsl(255,100%,50%) 225deg,hsl(240,100%,50%) 240deg,hsl(225,100%,50%) 255deg,hsl(210,100%,50%) 270deg,hsl(195,100%,50%) 285deg,hsl(180,100%,50%) 300deg,hsl(165,100%,50%) 315deg,hsl(150,100%,50%) 330deg,hsl(135,100%,50%) 345deg,hsl(120,100%,50%) 360deg)"></div>
<div class="a" style="left:635.4px;top:108.9px;width:48.2px;height:48.2px;border-radius:50%;background:#3a3a3a"></div>
<div class="a" style="left:643.7px;top:117.7px;width:30.6px;height:30.7px;background:linear-gradient(to bottom,rgba(0,0,0,0),#000),linear-gradient(to right,#fff,#ff2020)"></div>
<div class="a" style="left:672px;top:169.3px;width:34px;height:8px;background:#333333;"></div>
<div class="t" style="left:662px;top:170.5px;font-size:4.4px;color:#cfcfcf;">Opacity</div>
<svg width="720" height="405"><circle cx="681" cy="173.3" r="2.5" fill="#f0f0f0"/><circle cx="681" cy="173.3" r="0.9" fill="#888"/></svg>
<div class="t" style="left:686px;top:170.5px;font-size:4.7px;color:#f0f0f0;">100%</div>
<div class="a" style="left:608.4px;top:180px;width:101px;height:0.8px;background:#2a2a2a;"></div>
<div class="a" style="left:608.4px;top:183px;width:101px;height:6.5px;background:#2d2d2d;"></div>
<svg width="720" height="405"><path d="M701.5 184.5 H705.5 M701.5 186 H705.5 M701.5 187.5 H705.5" stroke="#888" stroke-width="0.6"/></svg>
<div class="a" style="left:608.4px;top:192px;width:93.6px;height:11px;background:#3a3a3a;"></div>
<div class="t" style="left:620px;width:60px;text-align:right;top:194.5px;font-size:4.8px;color:#e6e6e6">Polygo</div>
<svg width="720" height="405"><circle cx="695.5" cy="197.5" r="2.3" fill="none" stroke="#e0e0e0" stroke-width="0.9" stroke-dasharray="1.2 0.45"/></svg>
<div class="a" style="left:608.4px;top:203px;width:93.6px;height:11px;background:#3a3a3a;"></div>
<div class="t" style="left:620px;width:60px;text-align:right;top:205.5px;font-size:4.8px;color:#e6e6e6">Items</div>
<svg width="720" height="405"><circle cx="695.5" cy="208.5" r="2.3" fill="none" stroke="#e0e0e0" stroke-width="0.9" stroke-dasharray="1.2 0.45"/></svg>
<div class="a" style="left:608.4px;top:214px;width:93.6px;height:11px;background:#3a3a3a;"></div>
<div class="t" style="left:620px;width:60px;text-align:right;top:216.5px;font-size:4.8px;color:#e6e6e6">Items</div>
<svg width="720" height="405"><circle cx="695.5" cy="219.5" r="2.3" fill="none" stroke="#e0e0e0" stroke-width="0.9" stroke-dasharray="1.2 0.45"/></svg>
<div class="a" style="left:608.4px;top:225px;width:93.6px;height:11px;background:#4a5568;"></div>
<div class="t" style="left:620px;width:60px;text-align:right;top:227.5px;font-size:4.8px;color:#e6e6e6">Clipping</div>
<svg width="720" height="405"><circle cx="695.5" cy="230.5" r="2.3" fill="none" stroke="#e0e0e0" stroke-width="0.9" stroke-dasharray="1.2 0.45"/></svg>
<div class="a" style="left:608.4px;top:236px;width:93.6px;height:11px;background:#3b72c6;"></div>
<div class="t" style="left:620px;width:60px;text-align:right;top:238.5px;font-size:4.8px;color:#e6e6e6">Polygo</div>
<svg width="720" height="405"><circle cx="695.5" cy="241.5" r="2.3" fill="none" stroke="#e0e0e0" stroke-width="0.9" stroke-dasharray="1.2 0.45"/></svg>
<svg width="720" height="405"><circle cx="695.5" cy="230.5" r="1" fill="#ddd"/></svg>
<div class="a" style="left:702px;top:225px;width:3px;height:22px;background:#9a9a9a;"></div>
<div class="a" style="left:608.4px;top:247px;width:101px;height:6.3px;background:#2e2e2e;"></div>
<div class="a" style="left:608.4px;top:253.3px;width:101px;height:8.7px;background:#3a3a3a;"></div>
<svg width="720" height="405"><circle cx="700.3" cy="256.3" r="2.3" fill="none" stroke="#ddd" stroke-width="0.8"/><path d="M699.2 255.8 L700.3 256.9 L701.4 255.8" stroke="#ddd" stroke-width="0.6" fill="none"/></svg>
<div class="a" style="left:608.4px;top:262px;width:101px;height:2.4px;background:#2c2c2c;"></div>
<svg width="720" height="405"><path d="M672 269.5 H676 M672 271 H676 M672 272.5 H676" stroke="#777" stroke-width="0.6"/><rect x="680.5" y="268" width="5.6" height="5.6" rx="1.3" fill="#c8c8c8"/><path d="M681.8 270.8 H684.8" stroke="#333" stroke-width="0.8"/><rect x="689.3" y="268" width="5.6" height="5.6" rx="1.3" fill="#e6e6e6"/><path d="M690.6 270.8 H693.6 M692.1 269.3 V272.3" stroke="#333" stroke-width="0.8"/><path d="M699.6 268.6 H704.6" stroke="#ccc" stroke-width="0.7"/><rect x="700.2" y="269.2" width="3.8" height="4.5" rx="0.6" fill="#bbb"/></svg>
<div class="a" style="left:608.4px;top:278px;width:101px;height:0.8px;background:#2a2a2a;"></div>
<div class="a" style="left:608.4px;top:280px;width:101px;height:9px;background:#303030;"></div>
<svg width="720" height="405"><circle cx="674" cy="284.5" r="1.6" fill="none" stroke="#666" stroke-width="0.6"/></svg>
<svg width="720" height="405"><path d="M701.5 283 H705.5 M701.5 284.5 H705.5 M701.5 286 H705.5" stroke="#777" stroke-width="0.6"/></svg>
<div class="a" style="left:608.4px;top:289px;width:95px;height:111px;background:#3a3a3a;"></div>
<div class="a" style="left:702.5px;top:292px;width:2.5px;height:91px;background:#9a9a9a;"></div>
<svg width="720" height="405"><rect x="685" y="294" width="5" height="5" fill="#000" stroke="#eee" stroke-width="0.8"/><ellipse cx="696.8" cy="297" rx="2.4" ry="1.8" fill="#8a8a8a"/><circle cx="696.8" cy="297" r="0.8" fill="#444"/><rect x="674.5" y="305.5" width="4" height="4" fill="#000" stroke="#eee" stroke-width="0.7"/><ellipse cx="696.8" cy="308.3" rx="2.4" ry="1.8" fill="#8a8a8a"/><circle cx="696.8" cy="308.3" r="0.8" fill="#444"/><rect x="675" y="316.5" width="3" height="4" fill="none" stroke="#888" stroke-width="0.6"/><circle cx="696.8" cy="319" r="0.8" fill="#666"/></svg>
<div class="a" style="left:682px;top:304.5px;width:8.5px;height:7.5px;background:#f05a5a;"></div>
<div class="a" style="left:683px;top:315px;width:8px;height:8px;background:#f4f4f4;"></div>
<div class="a" style="left:608.4px;top:392px;width:101px;height:0.6px;background:#2f2f2f;"></div>
<svg width="720" height="405"><path d="M671.5 392.5 V397.5" stroke="#666" stroke-width="0.6"/><rect x="677.5" y="392.5" width="5" height="5" rx="1" fill="none" stroke="#777" stroke-width="0.6"/><circle cx="692" cy="395" r="2.6" fill="none" stroke="#ddd" stroke-width="0.7"/><circle cx="692" cy="395" r="0.9" fill="#ddd"/><path d="M699.5 392.5 H704.5 M700.3 393 V397.8 H703.7 V393" stroke="#ccc" stroke-width="0.6" fill="none"/></svg>
<div class="a" style="left:608.4px;top:400px;width:101px;height:3.5px;background:#2f2f2f;"></div>
<div class="a" style="left:708px;top:39px;width:12px;height:366px;background:#2f2f2f;"></div>
<div class="a" style="left:711px;top:41.5px;width:9px;height:8.5px;background:#3a3a3a;"></div>
<svg width="720" height="405"><path d="M712.5 45 H718" stroke="#888" stroke-width="1.5"/><path d="M712.5 51 H718 M712.5 53 H718 M712.5 55 H718" stroke="#999" stroke-width="0.7"/></svg>
<div class="a" style="left:711px;top:57px;width:9px;height:9.3px;background:#ffffff;"></div>
<div class="a" style="left:711px;top:66px;width:9px;height:6.899999999999994px;background:#ffffff;"></div>
<div class="a" style="left:711px;top:72.6px;width:9px;height:7.000000000000003px;background:#000000;"></div>
<div class="a" style="left:711px;top:79.3px;width:9px;height:8.40000000000001px;background:#fff4f4;"></div>
<div class="a" style="left:711px;top:87.4px;width:9px;height:7.699999999999991px;background:#10e8f8;"></div>
<div class="a" style="left:711px;top:94.8px;width:9px;height:7.900000000000008px;background:#f020f0;"></div>
<div class="a" style="left:711px;top:102.4px;width:9px;height:7.699999999999991px;background:#ffee10;"></div>
<div class="a" style="left:711px;top:109.8px;width:9px;height:7.7000000000000055px;background:#ff2a10;"></div>
<div class="a" style="left:711px;top:117.2px;width:9px;height:8.500000000000004px;background:#10e030;"></div>
<div class="a" style="left:711px;top:125.4px;width:9px;height:7.7000000000000055px;background:#1a2ae0;"></div>
<div class="a" style="left:711px;top:132.8px;width:9px;height:11.399999999999995px;background:#ffffff;"></div>
<div class="a" style="left:711px;top:143.9px;width:9px;height:5.399999999999994px;background:#ececec;"></div>
<div class="a" style="left:711px;top:149px;width:9px;height:9.100000000000012px;background:#d4d4d4;"></div>
<div class="a" style="left:711px;top:157.8px;width:9px;height:9.199999999999978px;background:#bababa;"></div>
<div class="a" style="left:711px;top:166.7px;width:9px;height:9.200000000000006px;background:#a0a0a0;"></div>
<div class="a" style="left:711px;top:175.6px;width:9px;height:9.100000000000012px;background:#888888;"></div>
<div class="a" style="left:711px;top:184.4px;width:9px;height:9.200000000000006px;background:#6c6c6c;"></div>
<div class="a" style="left:711px;top:193.3px;width:9px;height:5.9999999999999885px;background:#505050;"></div>
<div class="a" style="left:711px;top:199px;width:9px;height:8.3px;background:#363636;"></div>
<div class="a" style="left:711px;top:207px;width:9px;height:7.7000000000000055px;background:#000000;"></div>
<div class="a" style="left:711px;top:214.4px;width:9px;height:7.8px;background:#1a2ad0;"></div>
<div class="a" style="left:711px;top:221.9px;width:9px;height:9.899999999999995px;background:#10a040;"></div>
<div class="a" style="left:711px;top:231.5px;width:9px;height:6.2000000000000055px;background:#10a0a0;"></div>
<div class="a" style="left:711px;top:237.4px;width:9px;height:6.899999999999994px;background:#1090f0;"></div>
<div class="a" style="left:711px;top:244px;width:9px;height:7.9999999999999885px;background:#20f0b8;"></div>
<div class="a" style="left:711px;top:251.7px;width:9px;height:8.400000000000023px;background:#c01010;"></div>
<div class="a" style="left:711px;top:259.8px;width:9px;height:7.699999999999977px;background:#c020c0;"></div>
<div class="a" style="left:711px;top:267.2px;width:9px;height:7.700000000000034px;background:#9030f0;"></div>
<div class="a" style="left:711px;top:274.6px;width:9px;height:6.9999999999999885px;background:#a09020;"></div>
<div class="a" style="left:711px;top:281.3px;width:9px;height:6.9999999999999885px;background:#a0a0ff;"></div>
<div class="a" style="left:711px;top:288px;width:9px;height:8.3px;background:#80f040;"></div>
<div class="a" style="left:711px;top:296px;width:9px;height:7.3px;background:#70f060;"></div>
<div class="a" style="left:711px;top:303px;width:9px;height:9.3px;background:#70f0f0;"></div>
<div class="a" style="left:711px;top:312px;width:9px;height:7.699999999999977px;background:#f02080;"></div>
<div class="a" style="left:711px;top:319.4px;width:9px;height:8.900000000000023px;background:#ff9020;"></div>
<div class="a" style="left:711px;top:328px;width:9px;height:7.3px;background:#ff8090;"></div>
<div class="a" style="left:711px;top:335px;width:9px;height:7.3px;background:#e070ff;"></div>
<div class="a" style="left:711px;top:342px;width:9px;height:7.8px;background:#ffff80;"></div>
<div class="a" style="left:711px;top:349.5px;width:9px;height:1.8px;background:#402020;"></div>
<div class="a" style="left:711px;top:351px;width:9px;height:7.600000000000011px;background:#803030;"></div>
<div class="a" style="left:711px;top:358.3px;width:9px;height:6.9999999999999885px;background:#a04040;"></div>
<div class="a" style="left:711px;top:365px;width:9px;height:7.699999999999977px;background:#d06060;"></div>
<div class="a" style="left:711px;top:372.4px;width:9px;height:8.400000000000023px;background:#e03030;"></div>
<div class="a" style="left:711px;top:380.5px;width:9px;height:7.8px;background:#e07080;"></div>
<div class="a" style="left:711px;top:388px;width:9px;height:6.3px;background:#f0b0c0;"></div>
<div class="a" style="left:711px;top:394px;width:9px;height:6.8px;background:#a09090;"></div>
<svg width="720" height="405"><path d="M712 65 L719 58" stroke="#e04040" stroke-width="0.6"/><circle cx="715.5" cy="69.8" r="2" fill="none" stroke="#555" stroke-width="0.5"/></svg>
<svg width="720" height="405"><path d="M9.4 16.2 H13 L14.6 17.8 V23.2 H9.4 Z" stroke="#eeeeee" stroke-width="0.85" fill="none" stroke-linejoin="round"/><path d="M20.4 16.2 H24 L25.6 17.8 V23.2 H20.4 Z" stroke="#eeeeee" stroke-width="0.85" fill="none" stroke-linejoin="round"/><path d="M22 18 V22 M22 20 Q23.6 19 24 20.5 V22" stroke="#eeeeee" stroke-width="0.6" fill="none" stroke-linejoin="round"/><path d="M31.5 17 H30.5 V23 H36 V21" stroke="#eeeeee" stroke-width="0.7" fill="none" stroke-linejoin="round"/><path d="M33 21 L36.3 17.3 M34.5 17.2 H36.5 V19.2" stroke="#eeeeee" stroke-width="0.7" fill="none" stroke-linejoin="round"/><path d="M42.5 18 H47.5 M42.5 20 H47.5 M42.5 22 H47.5 M45 17 V23" stroke="#8a8a8a" stroke-width="0.6" fill="none" stroke-linejoin="round"/><path d="M52.5 18.5 H59.5 M52.5 20.5 H59.5 M53.5 22.5 H58.5" stroke="#8a8a8a" stroke-width="0.6" fill="none" stroke-linejoin="round"/><path d="M92 18.5 L94.5 16.8 L97 19.5 L95 21.5 Z M96.5 20.5 Q99 20.5 99.5 23" stroke="#eeeeee" stroke-width="0.8" fill="none" stroke-linejoin="round"/><path d="M104 19.5 L106.5 17 L109 19.5 L106.5 22 Z M102.5 22.5 Q104 21 105 22" stroke="#8a8a8a" stroke-width="0.6" fill="none" stroke-linejoin="round"/><path d="M115 17.5 H121 V23 H115 Z" stroke="#eeeeee" stroke-width="0.8" fill="none" stroke-linejoin="round"/><circle cx="120.8" cy="17.3" r="0.8" fill="#eee"/><circle cx="115.2" cy="23.2" r="0.8" fill="#eee"/><path d="M155 23 L156 16.5 H158.5 L159.5 23 Z" stroke="#eeeeee" stroke-width="0.6" fill="#bbb" stroke-linejoin="round"/><path d="M165.5 16.5 V23 M165.5 17 L171 18.5 V21.5 L165.5 23" stroke="#eeeeee" stroke-width="0.7" fill="#ccc" stroke-linejoin="round"/><circle cx="180" cy="19.8" r="3.3" fill="none" stroke="#eeeeee" stroke-width="0.7"/><circle cx="191" cy="19.8" r="3.3" fill="none" stroke="#eeeeee" stroke-width="0.7"/><circle cx="202" cy="19.8" r="3.3" fill="none" stroke="#eeeeee" stroke-width="0.7"/><path d="M178.5 19 H181.5 M180 17.8 V21" stroke="#eeeeee" stroke-width="0.6" fill="none" stroke-linejoin="round"/><path d="M189.5 21 L192.5 18.5 M189.5 18.5 H192.5" stroke="#eeeeee" stroke-width="0.6" fill="none" stroke-linejoin="round"/><path d="M200.5 19 H203.5 V21" stroke="#eeeeee" stroke-width="0.6" fill="none" stroke-linejoin="round"/><rect x="237.2" y="16.3" width="4.3" height="4.3" rx="0.8" fill="none" stroke="#8a8a8a" stroke-width="0.7"/><circle cx="241.3" cy="21" r="2.4" fill="none" stroke="#8a8a8a" stroke-width="0.7"/><rect x="249.2" y="16.3" width="4.3" height="4.3" rx="0.8" fill="none" stroke="#eeeeee" stroke-width="0.7"/><circle cx="253.3" cy="21" r="2.4" fill="#9a9a9a" stroke="#eeeeee" stroke-width="0.7"/><rect x="259.7" y="16.3" width="4.3" height="4.3" rx="0.8" fill="none" stroke="#eeeeee" stroke-width="0.7"/><circle cx="263.8" cy="21" r="2.4" fill="#9a9a9a" stroke="#eeeeee" stroke-width="0.7"/><rect x="271.2" y="16.3" width="4.3" height="4.3" rx="0.8" fill="none" stroke="#eeeeee" stroke-width="0.7"/><circle cx="275.3" cy="21" r="2.4" fill="none" stroke="#eeeeee" stroke-width="0.7"/><rect x="282.7" y="16.3" width="4.3" height="4.3" rx="0.8" fill="none" stroke="#8a8a8a" stroke-width="0.7"/><circle cx="286.8" cy="21" r="2.4" fill="none" stroke="#8a8a8a" stroke-width="0.7"/><rect x="294.2" y="16.3" width="4.3" height="4.3" rx="0.8" fill="none" stroke="#eeeeee" stroke-width="0.7"/><circle cx="298.3" cy="21" r="2.4" fill="#9a9a9a" stroke="#eeeeee" stroke-width="0.7"/><rect x="305.2" y="16.3" width="4.3" height="4.3" rx="0.8" fill="none" stroke="#eeeeee" stroke-width="0.7"/><circle cx="309.3" cy="21" r="2.4" fill="#9a9a9a" stroke="#eeeeee" stroke-width="0.7"/><rect x="316.7" y="16.3" width="4.3" height="4.3" rx="0.8" fill="none" stroke="#eeeeee" stroke-width="0.7"/><circle cx="320.8" cy="21" r="2.4" fill="none" stroke="#eeeeee" stroke-width="0.7"/><path d="M353.5 17 Q360 17.5 361 23.5 M353.5 19.3 Q358 19.8 358.8 23.5 M353.5 21.6 Q356 22 356.5 23.5" stroke="#eeeeee" stroke-width="0.8" fill="none" stroke-linejoin="round"/><path d="M366.5 16.8 H372.5 V22.8 H366.5 Z" stroke="#eeeeee" stroke-width="0.7" fill="none" stroke-linejoin="round"/><rect x="367.5" y="18" width="2.5" height="2.5" fill="#eee"/><rect x="370" y="20.3" width="2" height="2" fill="#888"/><circle cx="381" cy="19.8" r="3.3" fill="none" stroke="#ccc" stroke-width="0.7"/><path d="M379 18.5 H383 M379 20 H383 M379 21.5 H383" stroke="#eeeeee" stroke-width="0.5" fill="none" stroke-linejoin="round"/><path d="M417 17.5 V23 H422.5 M419 19.5 H422.5 V17" stroke="#9a9a9a" stroke-width="0.7" fill="none" stroke-linejoin="round"/><path d="M429 17.5 H428.3 V23 H434.3 V21 M430.5 21 L434.6 17 M432.3 17 H434.6 V19.3" stroke="#eeeeee" stroke-width="0.8" fill="none" stroke-linejoin="round"/><circle cx="442" cy="19.8" r="3.2" fill="none" stroke="#eee" stroke-width="0.8"/><path d="M440.6 21.6 L443.6 18" stroke="#eeeeee" stroke-width="0.8" fill="none" stroke-linejoin="round"/><path d="M449.5 17 H456.5 M451 17 V23 M455 17 V23 M450 23 H452 M454 23 H456" stroke="#eeeeee" stroke-width="0.9" fill="none" stroke-linejoin="round"/><path d="M460.5 17 V23 M462.5 17 V23 M464.3 23 L466 17.2 L467.7 23 M465 21.2 H467" stroke="#eeeeee" stroke-width="0.8" fill="none" stroke-linejoin="round"/><path d="M471.5 17 V23 M473.3 17 V23 M475.2 17 V23 M475.2 20.5 Q478 19 478 21 V23" stroke="#eeeeee" stroke-width="0.8" fill="none" stroke-linejoin="round"/><path d="M482.5 17 V23 M484.3 17 V23 M486 23 L487.8 17.2 L489.5 23 M486.8 21.2 H488.8" stroke="#d8d8d8" stroke-width="0.8" fill="none" stroke-linejoin="round"/><rect x="482" y="21.5" width="8" height="1.5" fill="#30a070" opacity="0.7"/><rect x="482" y="16.5" width="3" height="2" fill="#a04080" opacity="0.5"/><path d="M522.5 16.5 H530 V22 H526 L524 24 V22 H522.5 Z" stroke="#eeeeee" stroke-width="0.7" fill="none" stroke-linejoin="round"/><rect x="533" y="16.3" width="8.5" height="7.3" fill="#777" stroke="#aaa" stroke-width="0.5"/><path d="M533.5 23.3 L541 16.7" stroke="#333" stroke-width="1.2" fill="none" stroke-linejoin="round"/><rect x="545" y="16.3" width="7.3" height="7.3" fill="#eee"/><path d="M545.5 23.3 L552 16.7" stroke="#111" stroke-width="1.3" fill="none" stroke-linejoin="round"/><rect x="554.5" y="15.6" width="11.5" height="8.4" fill="#3d85c8"/><circle cx="560.2" cy="19.8" r="2.8" fill="none" stroke="#cfe6ff" stroke-width="0.7"/><circle cx="560.2" cy="19.8" r="1" fill="#cfe6ff"/><path d="M596 18 L600 20.5 M598.5 17 L602 21.5 L601 23 L599 22 Z" stroke="#eeeeee" stroke-width="0.6" fill="none" stroke-linejoin="round"/><path d="M608 19.8 L611 16.8 L614 19.8 L611 22.8 Z M609.5 19.8 H612.5" stroke="#eeeeee" stroke-width="0.7" fill="none" stroke-linejoin="round"/><path d="M619 16.8 H626 V23 H619 Z M620.5 21.5 L624.5 18 M622.5 18 H624.5 V20" stroke="#eeeeee" stroke-width="0.6" fill="none" stroke-linejoin="round"/><path d="M632 18 V22 M639 18 V22 M632 20 H639" stroke="#eeeeee" stroke-width="0.7" fill="none" stroke-linejoin="round"/><circle cx="646" cy="19.8" r="3.2" fill="none" stroke="#ccc" stroke-width="0.7"/><circle cx="646" cy="19.8" r="1.5" fill="none" stroke="#ccc" stroke-width="0.6"/><path d="M654.5 22.5 L657 17 L659.5 18.5 L657.5 23.5 Z M658.5 17.5 L661 16.5" stroke="#eeeeee" stroke-width="0.7" fill="#888" stroke-linejoin="round"/><path d="M694 19.5 Q697 15 700 19.5 L700 23 H694 Z" stroke="#bbb" stroke-width="0.6" fill="#888" stroke-linejoin="round"/><path d="M705.5 23.5 V20.5 L707 19.5 H709.5 L711 20.5 V23.5 M706.5 18.5 L707 16.3 H709.3 L709.8 18.5" stroke="#eeeeee" stroke-width="0.8" fill="none" stroke-linejoin="round"/></svg>
<div class="t" style="left:27px;top:31.0px;font-size:4.7px;color:#e6e6e6;">Clipping Group</div>
<div class="a" style="left:100.3px;top:28.5px;width:20.7px;height:9px;background:#303030;"></div>
<div class="t" style="left:103.3px;top:31.0px;font-size:4.5px;color:#eaeaea;">1 pt</div>
<div class="a" style="left:220px;top:28.5px;width:18.5px;height:9px;background:#303030;"></div>
<div class="t" style="left:223px;top:31.0px;font-size:4.5px;color:#eaeaea;">96.8 pt</div>
<div class="a" style="left:283px;top:28.5px;width:18px;height:9px;background:#303030;"></div>
<div class="t" style="left:286px;top:31.0px;font-size:4.5px;color:#eaeaea;">96.8 pt</div>
<div class="a" style="left:338px;top:28.5px;width:15px;height:9px;background:#303030;"></div>
<div class="t" style="left:341px;top:31.0px;font-size:4.5px;color:#eaeaea;">6</div>
<div class="a" style="left:387px;top:28.5px;width:20px;height:9px;background:#303030;"></div>
<div class="t" style="left:390px;top:31.0px;font-size:4.5px;color:#eaeaea;">0 pt</div>
<svg width="720" height="405"><polygon points="80.45,33.76 78.66,35.55 76.14,35.55 74.35,33.76 74.35,31.24 76.14,29.45 78.66,29.45 80.45,31.24" fill="#5a5a5a" stroke="#b8b8b8" stroke-width="0.8"/><circle cx="77.4" cy="32.5" r="1.3" fill="#aaa"/><path d="M96.4 30.2 L98.5 32.5 L96.4 34.8 L94.3 32.5 Z" stroke="#ccc" stroke-width="0.6" fill="none" stroke-linejoin="round"/><rect x="123.6" y="29.5" width="2" height="2.2" fill="#bbb"/><rect x="123.6" y="33.3" width="2" height="2.2" fill="#bbb"/><rect x="246" y="29.5" width="2" height="2.2" fill="#bbb"/><rect x="246" y="33.3" width="2" height="2.2" fill="#bbb"/><rect x="307" y="29.5" width="2" height="2.2" fill="#bbb"/><rect x="307" y="33.3" width="2" height="2.2" fill="#bbb"/><rect x="357" y="29.5" width="2" height="2.2" fill="#bbb"/><rect x="357" y="33.3" width="2" height="2.2" fill="#bbb"/><rect x="407" y="29.5" width="2" height="2.2" fill="#bbb"/><rect x="407" y="33.3" width="2" height="2.2" fill="#bbb"/><path d="M185.4 31.7 L187 33.3 L188.6 31.7" stroke="#ddd" stroke-width="0.7" fill="none" stroke-linejoin="round"/><path d="M415.5 30 Q421.5 29.5 422.5 35.5 M421 34 L422.5 36 L424 34" stroke="#ddd" stroke-width="0.7" fill="none" stroke-linejoin="round"/><path d="M427.5 30 Q436 30 437 37 M427.5 32.5 Q433 32.5 434 37" stroke="#ddd" stroke-width="0.8" fill="none" stroke-linejoin="round"/><circle cx="443" cy="33" r="0.75" fill="#eee"/><circle cx="446" cy="33" r="0.75" fill="#eee"/><circle cx="449" cy="33" r="0.75" fill="#eee"/><path d="M576 31 H579 M576 34 H579 M576 31 V34" stroke="#bbb" stroke-width="0.6" fill="none" stroke-linejoin="round"/><rect x="582.5" y="30.5" width="3.2" height="3.6" fill="#ccc"/><path d="M589 30.5 H594 M589 32 H594 M589 33.5 H594 M589 35 H594" stroke="#bbb" stroke-width="0.6" fill="none" stroke-linejoin="round"/><path d="M607.1 30 V35.5" stroke="#ddd" stroke-width="0.7"/><rect x="607.8000000000001" y="30.6" width="3.6" height="1.7" fill="#ddd"/><rect x="607.8000000000001" y="33.3" width="2.4" height="1.7" fill="#ddd"/><path d="M619.2 30 V35.5" stroke="#ddd" stroke-width="0.7"/><rect x="617.2" y="30.6" width="4" height="1.7" fill="#ddd"/><rect x="617.8000000000001" y="33.3" width="2.8" height="1.7" fill="#ddd"/><path d="M631.2 30 V35.5" stroke="#ddd" stroke-width="0.7"/><rect x="626.9000000000001" y="30.6" width="3.6" height="1.7" fill="#ddd"/><rect x="628.1" y="33.3" width="2.4" height="1.7" fill="#ddd"/><path d="M635.0 35.5 L640.0 30" stroke="#ddd" stroke-width="0.6"/><rect x="635.0" y="32.5" width="2.4" height="2.4" fill="#ddd"/><rect x="637.5" y="30.2" width="2" height="2" fill="#ddd"/><path d="M645.0 30 H650.0" stroke="#ddd" stroke-width="0.7"/><rect x="645.5" y="30.6" width="1.7" height="4.4" fill="#ddd"/><rect x="648.0" y="30.6" width="1.7" height="3" fill="#ddd"/><path d="M654.0 32.7 H659.0" stroke="#ddd" stroke-width="0.7"/><rect x="654.5" y="30.3" width="1.7" height="4.8" fill="#ddd"/><rect x="657.0" y="31" width="1.7" height="3.4" fill="#ddd"/><path d="M662.9 35.5 H667.9" stroke="#ddd" stroke-width="0.7"/><rect x="663.4" y="30.6" width="1.7" height="4.4" fill="#ddd"/><rect x="665.9" y="32" width="1.7" height="3" fill="#ddd"/><path d="M672.1 35.5 L677.1 30" stroke="#ddd" stroke-width="0.6"/><rect x="672.3000000000001" y="33" width="2" height="2" fill="#ddd"/><rect x="674.9" y="30.3" width="2.3" height="2.3" fill="#ddd"/><circle cx="684" cy="33" r="0.75" fill="#eee"/><circle cx="687" cy="33" r="0.75" fill="#eee"/><circle cx="690" cy="33" r="0.75" fill="#eee"/><path d="M710.5 30.5 H716 M710.5 32 H716 M710.5 33.5 H716 M710.5 35 H716" stroke="#888" stroke-width="0.6" fill="none" stroke-linejoin="round"/></svg>
<div class="t" style="left:139px;top:31.0px;font-size:4.7px;color:#e0e0e0;">Shape</div>
<div class="a" style="left:154px;top:28.5px;width:38px;height:9px;background:#565656;"></div>
<div class="t" style="left:157px;top:31.0px;font-size:4.6px;color:#e8e8e8;">Custom</div>
<svg width="720" height="405"><path d="M185.4 31.7 L187 33.3 L188.6 31.7" stroke="#ddd" stroke-width="0.7" fill="none"/></svg>
<div class="t" style="left:205px;top:31.0px;font-size:4.7px;color:#e0e0e0;">Radius</div>
<div class="t" style="left:267px;top:31.0px;font-size:4.7px;color:#e0e0e0;">Length</div>
<div class="t" style="left:326px;top:31.0px;font-size:4.7px;color:#e0e0e0;">Sides</div>
<div class="t" style="left:370px;top:31.0px;font-size:4.7px;color:#e0e0e0;">Corner</div>
<div class="t" style="left:473.5px;top:31.0px;font-size:4.7px;color:#e0e0e0;">Fill</div>
<div class="a" style="left:481.5px;top:28.5px;width:18.5px;height:8.5px;background:#fc5454;"></div>
<div class="t" style="left:510px;top:31.0px;font-size:4.7px;color:#e0e0e0;">Stroke</div>
<div class="a" style="left:526px;top:28.5px;width:16.5px;height:8.5px;background:#e2e2e2;"></div>
<div class="a" style="left:547.5px;top:28.5px;width:25.5px;height:9px;background:#2e2e2e;"></div>
<div class="t" style="left:550px;top:31.0px;font-size:4.6px;color:#e8e8e8;">None</div>
<svg width="720" height="405"><path d="M6.3 54.5 V62 L8 60.3 L9.5 63 L10.5 62.4 L9.2 59.8 H11.5 Z" stroke="#fff" stroke-width="0.5" fill="#fff" stroke-linejoin="round" stroke-linecap="round"/><path d="M6 68 V75 L7.8 73.5 M6 68 L11 72.5 H8" stroke="#eee" stroke-width="0.8" fill="#dcdcdc" stroke-linejoin="round" stroke-linecap="round"/><path d="M5.5 88.5 L7.5 80.5 M6 84.5 H11 M5 88.5 H11.5" stroke="#ddd" stroke-width="0.8" fill="none" stroke-linejoin="round" stroke-linecap="round"/><path d="M5.5 101.5 Q4.5 98 7 96 L10 93.5 L11.5 95 L9 98.5 Q8 102.5 5.5 101.5 Z" stroke="#e0e0e0" stroke-width="0.9" fill="none" stroke-linejoin="round" stroke-linecap="round"/><path d="M5 107 H11 V112.5 H5 Z" stroke="#d8d8d8" stroke-width="0.8" fill="none" stroke-linejoin="round" stroke-linecap="round"/><path d="M5 116 H10 V119 H5" stroke="#777" stroke-width="0.6" fill="none" stroke-linejoin="round" stroke-linecap="round"/><path d="M4.8 132 L11 124" stroke="#f0f0f0" stroke-width="1.1" fill="none" stroke-linejoin="round" stroke-linecap="round"/><path d="M5 136.5 H11 L10 143.5 H5 Z" stroke="#9a9a9a" stroke-width="0.8" fill="none" stroke-linejoin="round" stroke-linecap="round"/><path d="M5.3 153 L6.7 151 H9.3 L10.7 153 L10 157 L8 158.5 L6 157 Z" stroke="#aaa" stroke-width="0.8" fill="none" stroke-linejoin="round" stroke-linecap="round"/><path d="M4.8 164 H11.2 M8 164 V170.5 M6.8 170.5 H9.2" stroke="#f2f2f2" stroke-width="1.5" fill="none" stroke-linejoin="round" stroke-linecap="round"/><circle cx="7.8" cy="180" r="3.2" fill="#bbb"/><circle cx="7" cy="180" r="1.2" fill="#555"/><path d="M9 178 L11 176.5" stroke="#ddd" stroke-width="0.8"/><path d="M5 196 L10.5 188.5 M5.5 189 L10.5 195.5" stroke="#c8c8c8" stroke-width="1.0" fill="none" stroke-linejoin="round" stroke-linecap="round"/><path d="M5 215 Q5 210 8.5 208 L11 206.5" stroke="#e8e8e8" stroke-width="0.9" fill="none" stroke-linejoin="round" stroke-linecap="round"/><circle cx="6.5" cy="211.5" r="2.5" fill="#888"/><rect x="4.3" y="220.3" width="7.2" height="7" fill="#999" stroke="#c8c8c8" stroke-width="0.5"/><circle cx="8" cy="236.5" r="3.6" fill="#8a8a8a" stroke="#aaa" stroke-width="0.5"/><path d="M4.5 252.5 L6.5 247 L10.5 246.5 L11 252 Z" stroke="#999" stroke-width="0.8" fill="#7a7a7a" stroke-linejoin="round" stroke-linecap="round"/><rect x="4.5" y="263" width="4.5" height="8" fill="#c0c0c0"/><path d="M4.5 281 L8 276.5 L11.5 279.5 L9 284.5 Z" stroke="#999" stroke-width="0.8" fill="#808080" stroke-linejoin="round" stroke-linecap="round"/><circle cx="7.5" cy="290.5" r="2" fill="#eee"/><path d="M4.8 296 Q7.5 292 10.2 296 Z" stroke="#eee" stroke-width="0.9" fill="#eee" stroke-linejoin="round" stroke-linecap="round"/><circle cx="7.5" cy="310" r="3.5" fill="none" stroke="#aaa" stroke-width="0.7"/><path d="M5.8 312 L10 307.5" stroke="#f0f0f0" stroke-width="1.0" fill="none" stroke-linejoin="round" stroke-linecap="round"/><path d="M4.5 320.5 H9 L11 322.5 V327.5 H4.5 Z" stroke="#999" stroke-width="0.8" fill="#8a8a8a" stroke-linejoin="round" stroke-linecap="round"/><circle cx="6.8" cy="335.5" r="2.6" fill="#888" stroke="#bbb" stroke-width="0.6"/><path d="M8.8 337.5 L11.8 340.5" stroke="#ddd" stroke-width="1.0" fill="none" stroke-linejoin="round" stroke-linecap="round"/><circle cx="12" cy="76" r="0.8" fill="#bbb"/><circle cx="12" cy="89" r="0.8" fill="#bbb"/><circle cx="12" cy="102" r="0.8" fill="#bbb"/><circle cx="12" cy="114" r="0.8" fill="#bbb"/><circle cx="12" cy="133" r="0.8" fill="#bbb"/><circle cx="12" cy="145" r="0.8" fill="#bbb"/><circle cx="12" cy="159" r="0.8" fill="#bbb"/><circle cx="12" cy="171" r="0.8" fill="#bbb"/><circle cx="12" cy="184" r="0.8" fill="#bbb"/><circle cx="12" cy="197" r="0.8" fill="#bbb"/><circle cx="12" cy="216" r="0.8" fill="#bbb"/><circle cx="12" cy="229" r="0.8" fill="#bbb"/><circle cx="12" cy="241" r="0.8" fill="#bbb"/><circle cx="12" cy="255" r="0.8" fill="#bbb"/><circle cx="12" cy="272" r="0.8" fill="#bbb"/><circle cx="12" cy="285" r="0.8" fill="#bbb"/><circle cx="12" cy="297" r="0.8" fill="#bbb"/><circle cx="12" cy="314" r="0.8" fill="#bbb"/><circle cx="12" cy="328" r="0.8" fill="#bbb"/><circle cx="12" cy="341" r="0.8" fill="#bbb"/></svg>
<div class="a" style="left:325px;top:157px;width:347px;height:246.5px;background:#252525;"></div>
<div class="a" style="left:325px;top:157px;width:1.8px;height:246.5px;background:#1f1f1f;"></div>
<div class="a" style="left:325px;top:157px;width:347px;height:0.6px;background:#2c2c2c;"></div>
<div class="t" style="left:339.8px;top:203.5px;font-size:4.6px;color:#f8f8f8;">Decrease Polygon Sides</div>
<div class="t" style="left:339.8px;top:210.60000000000002px;font-size:4.6px;color:#f8f8f8;">Clockwise Polygon</div>
<div class="t" style="left:339.8px;top:225.3px;font-size:4.6px;color:#f8f8f8;">Cut</div>
<div class="t" style="left:493px;width:60px;text-align:right;top:225.3px;font-size:4.7px;color:#f0f0f0">Ctrl+X</div>
<div class="t" style="left:339.8px;top:232.3px;font-size:4.6px;color:#f8f8f8;">Copy</div>
<div class="t" style="left:493px;width:60px;text-align:right;top:232.3px;font-size:4.7px;color:#f0f0f0">Ctrl+C</div>
<div class="t" style="left:339.8px;top:239.3px;font-size:4.6px;color:#f8f8f8;">Paste</div>
<div class="t" style="left:493px;width:60px;text-align:right;top:239.3px;font-size:4.7px;color:#f0f0f0">Ctrl+V</div>
<div class="t" style="left:339.8px;top:246.3px;font-size:4.6px;color:#f8f8f8;">Attributes</div>
<div class="t" style="left:339.8px;top:253.3px;font-size:4.6px;color:#f8f8f8;">Delete</div>
<div class="t" style="left:493px;width:60px;text-align:right;top:253.3px;font-size:4.7px;color:#f0f0f0">Back</div>
<div class="t" style="left:339.8px;top:268.0px;font-size:4.6px;color:#f8f8f8;">Undo Move</div>
<div class="t" style="left:493px;width:60px;text-align:right;top:268.0px;font-size:4.7px;color:#f0f0f0">Ctrl+Z</div>
<div class="t" style="left:339.8px;top:275.1px;font-size:4.6px;color:#5a5a5a;">Redo</div>
<div class="t" style="left:339.8px;top:282.3px;font-size:4.6px;color:#f8f8f8;">Repeat</div>
<div class="t" style="left:339.8px;top:297.2px;font-size:4.6px;color:#f8f8f8;">Select All</div>
<div class="t" style="left:493px;width:60px;text-align:right;top:297.2px;font-size:4.7px;color:#f0f0f0">Ctrl+A</div>
<div class="t" style="left:339.8px;top:304.1px;font-size:4.6px;color:#f8f8f8;">Selection</div>
<div class="t" style="left:339.8px;top:318.3px;font-size:4.6px;color:#f8f8f8;">Ungroup</div>
<div class="t" style="left:493px;width:60px;text-align:right;top:318.3px;font-size:4.7px;color:#f0f0f0">Shift+Ctrl+G</div>
<div class="t" style="left:339.8px;top:325.3px;font-size:4.6px;color:#5a5a5a;">Move Inside Last</div>
<div class="t" style="left:493px;width:60px;text-align:right;top:325.3px;font-size:4.7px;color:#5a5a5a">Shift+Alt+Right</div>
<div class="t" style="left:339.8px;top:332.3px;font-size:4.6px;color:#f8f8f8;">Arrange</div>
<div class="t" style="left:339.8px;top:346.3px;font-size:4.6px;color:#f8f8f8;">Convert / Expand</div>
<div class="t" style="left:339.8px;top:353.3px;font-size:4.6px;color:#f8f8f8;">Combine Shape</div>
<div class="t" style="left:339.8px;top:360.3px;font-size:4.6px;color:#f8f8f8;">Reverse Path Direction</div>
<div class="t" style="left:339.8px;top:375.3px;font-size:4.6px;color:#5a5a5a;">Snapping</div>
<div class="t" style="left:339.8px;top:382.3px;font-size:4.6px;color:#f8f8f8;">Increase Polygon Sides</div>
<div class="t" style="left:339.8px;top:389.3px;font-size:4.6px;color:#f8f8f8;">Transformed Fill</div>
<div class="t" style="left:339.8px;top:396.0px;font-size:4.6px;color:#f8f8f8;">Render as Image</div>
<svg width="720" height="405"><path d="M328 218.6 H560" stroke="#1b1b1b" stroke-width="1.3"/><path d="M328 220.2 H560" stroke="#323232" stroke-width="0.9"/><path d="M557 247.6 L559.2 249 L557 250.4 Z" fill="#ddd"/><path d="M328 261.1 H560" stroke="#1b1b1b" stroke-width="1.3"/><path d="M328 262.7 H560" stroke="#323232" stroke-width="0.9"/><path d="M557 283.6 L559.2 285 L557 286.4 Z" fill="#ddd"/><path d="M328 290.1 H560" stroke="#1b1b1b" stroke-width="1.3"/><path d="M328 291.7 H560" stroke="#323232" stroke-width="0.9"/><path d="M557 305.40000000000003 L559.2 306.8 L557 308.2 Z" fill="#ddd"/><path d="M328 311.40000000000003 H560" stroke="#1b1b1b" stroke-width="1.3"/><path d="M328 313.0 H560" stroke="#323232" stroke-width="0.9"/><path d="M557 333.6 L559.2 335 L557 336.4 Z" fill="#ddd"/><path d="M328 339.6 H560" stroke="#1b1b1b" stroke-width="1.3"/><path d="M328 341.2 H560" stroke="#323232" stroke-width="0.9"/><path d="M557 347.6 L559.2 349 L557 350.4 Z" fill="#ddd"/><path d="M557 354.6 L559.2 356 L557 357.4 Z" fill="#ddd"/><path d="M328 368.1 H560" stroke="#1b1b1b" stroke-width="1.3"/><path d="M328 369.7 H560" stroke="#323232" stroke-width="0.9"/><path d="M557 376.6 L559.2 378 L557 379.4 Z" fill="#888"/></svg>
<div class="a" style="left:0px;top:402.6px;width:720px;height:1.2px;background:#1c1c1c;"></div>
<div class="a" style="left:0px;top:403.8px;width:720px;height:1.2px;background:#8c8c8c;"></div>
</body></html>
